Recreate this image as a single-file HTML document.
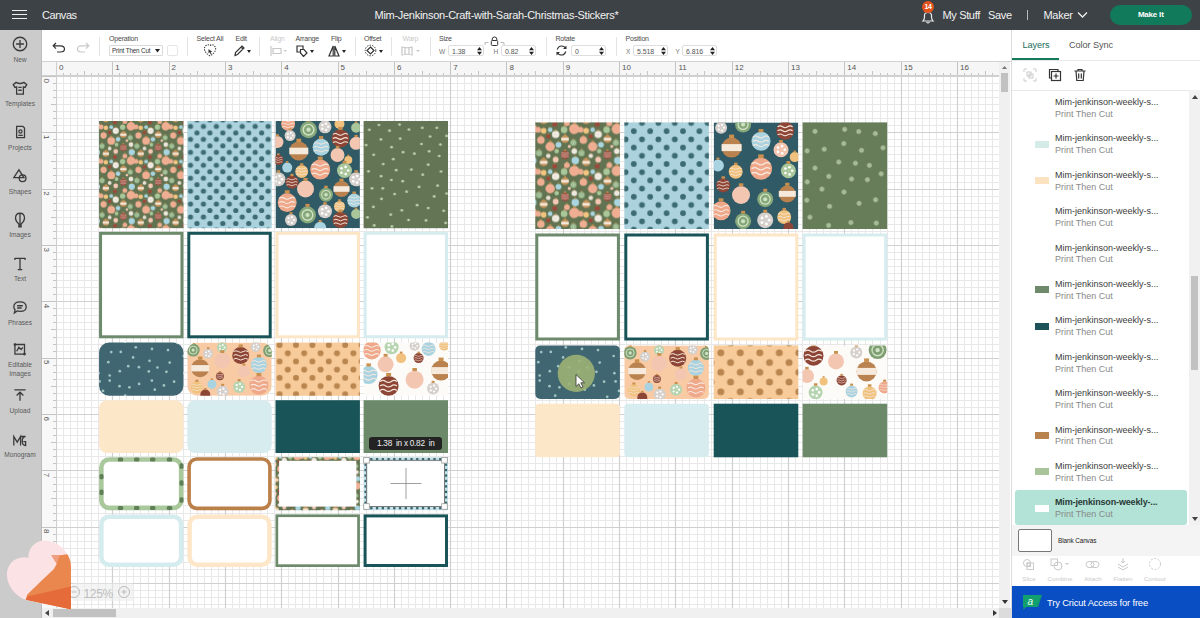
<!DOCTYPE html><html><head><meta charset="utf-8"><style>html,body{margin:0;padding:0;}body{width:1200px;height:618px;overflow:hidden;position:relative;background:#fff;font-family:"Liberation Sans", sans-serif;}</style></head><body><svg width="944" height="532" style="position:absolute;left:56px;top:76px"><rect width="944" height="532" fill="#ffffff"/><path d="M7.5 0V532M14.5 0V532M21.5 0V532M28.5 0V532M35.5 0V532M42.5 0V532M49.5 0V532M63.5 0V532M70.5 0V532M77.5 0V532M84.5 0V532M92.5 0V532M99.5 0V532M106.5 0V532M120.5 0V532M127.5 0V532M134.5 0V532M141.5 0V532M148.5 0V532M155.5 0V532M162.5 0V532M176.5 0V532M183.5 0V532M190.5 0V532M197.5 0V532M204.5 0V532M211.5 0V532M218.5 0V532M232.5 0V532M239.5 0V532M246.5 0V532M253.5 0V532M260.5 0V532M267.5 0V532M275.5 0V532M289.5 0V532M296.5 0V532M303.5 0V532M310.5 0V532M317.5 0V532M324.5 0V532M331.5 0V532M345.5 0V532M352.5 0V532M359.5 0V532M366.5 0V532M373.5 0V532M380.5 0V532M387.5 0V532M401.5 0V532M408.5 0V532M415.5 0V532M422.5 0V532M429.5 0V532M436.5 0V532M443.5 0V532M458.5 0V532M465.5 0V532M472.5 0V532M479.5 0V532M486.5 0V532M493.5 0V532M500.5 0V532M514.5 0V532M521.5 0V532M528.5 0V532M535.5 0V532M542.5 0V532M549.5 0V532M556.5 0V532M570.5 0V532M577.5 0V532M584.5 0V532M591.5 0V532M598.5 0V532M605.5 0V532M612.5 0V532M626.5 0V532M633.5 0V532M641.5 0V532M648.5 0V532M655.5 0V532M662.5 0V532M669.5 0V532M683.5 0V532M690.5 0V532M697.5 0V532M704.5 0V532M711.5 0V532M718.5 0V532M725.5 0V532M739.5 0V532M746.5 0V532M753.5 0V532M760.5 0V532M767.5 0V532M774.5 0V532M781.5 0V532M795.5 0V532M802.5 0V532M809.5 0V532M816.5 0V532M824.5 0V532M831.5 0V532M838.5 0V532M852.5 0V532M859.5 0V532M866.5 0V532M873.5 0V532M880.5 0V532M887.5 0V532M894.5 0V532M908.5 0V532M915.5 0V532M922.5 0V532M929.5 0V532M936.5 0V532M943.5 0V532M0 7.5H944M0 14.5H944M0 21.5H944M0 28.5H944M0 35.5H944M0 42.5H944M0 49.5H944M0 63.5H944M0 70.5H944M0 78.5H944M0 85.5H944M0 92.5H944M0 99.5H944M0 106.5H944M0 120.5H944M0 127.5H944M0 134.5H944M0 141.5H944M0 148.5H944M0 155.5H944M0 162.5H944M0 176.5H944M0 183.5H944M0 190.5H944M0 197.5H944M0 204.5H944M0 211.5H944M0 218.5H944M0 232.5H944M0 239.5H944M0 246.5H944M0 253.5H944M0 261.5H944M0 268.5H944M0 275.5H944M0 289.5H944M0 296.5H944M0 303.5H944M0 310.5H944M0 317.5H944M0 324.5H944M0 331.5H944M0 345.5H944M0 352.5H944M0 359.5H944M0 366.5H944M0 373.5H944M0 380.5H944M0 387.5H944M0 401.5H944M0 408.5H944M0 415.5H944M0 422.5H944M0 429.5H944M0 437.5H944M0 444.5H944M0 458.5H944M0 465.5H944M0 472.5H944M0 479.5H944M0 486.5H944M0 493.5H944M0 500.5H944M0 514.5H944M0 521.5H944M0 528.5H944" stroke="#e8e8e8" stroke-width="1" fill="none"/><path d="M0.5 0V532M56.5 0V532M113.5 0V532M169.5 0V532M225.5 0V532M282.5 0V532M338.5 0V532M394.5 0V532M450.5 0V532M507.5 0V532M563.5 0V532M619.5 0V532M676.5 0V532M732.5 0V532M788.5 0V532M845.5 0V532M901.5 0V532M0 0.5H944M0 56.5H944M0 113.5H944M0 169.5H944M0 225.5H944M0 282.5H944M0 338.5H944M0 394.5H944M0 451.5H944M0 507.5H944" stroke="#d0d0d0" stroke-width="1.2" fill="none"/></svg><svg width="1200" height="618" style="position:absolute;left:0;top:0"><defs><pattern id="pA" patternUnits="userSpaceOnUse" width="42.5" height="42" patternTransform="translate(535.3 122.4)"><rect width="42.5" height="42" fill="#617351"/><circle cx="2.8" cy="7.4" r="2.9" fill="#efae92"/><rect x="2.1" y="3.6" width="1.4" height="1.0" fill="#c9904f"/><circle cx="45.3" cy="7.4" r="2.9" fill="#efae92"/><rect x="44.6" y="3.6" width="1.4" height="1.0" fill="#c9904f"/><circle cx="8.4" cy="8.4" r="2.8" fill="#f1c47f"/><rect x="7.7" y="4.8" width="1.4" height="1.0" fill="#c9904f"/><circle cx="14.9" cy="7.4" r="2.3" fill="#a9d5e0"/><rect x="14.3" y="4.4" width="1.1" height="0.8" fill="#c9904f"/><circle cx="19.5" cy="1.9" r="2.5" fill="#9a4a3a"/><rect x="18.9" y="-1.4" width="1.2" height="0.9" fill="#c9904f"/><circle cx="19.5" cy="43.9" r="2.5" fill="#9a4a3a"/><rect x="18.9" y="40.6" width="1.2" height="0.9" fill="#c9904f"/><circle cx="28.8" cy="7.4" r="3.3" fill="#a9c89a"/><rect x="28.0" y="3.1" width="1.6" height="1.2" fill="#c9904f"/><circle cx="-3.5" cy="6.5" r="5.2" fill="#efae92"/><rect x="-4.8" y="-0.3" width="2.6" height="1.8" fill="#c9904f"/><circle cx="-3.5" cy="48.5" r="5.2" fill="#efae92"/><rect x="-4.8" y="41.7" width="2.6" height="1.8" fill="#c9904f"/><circle cx="39.0" cy="6.5" r="5.2" fill="#efae92"/><rect x="37.7" y="-0.3" width="2.6" height="1.8" fill="#c9904f"/><circle cx="39.0" cy="48.5" r="5.2" fill="#efae92"/><rect x="37.7" y="41.7" width="2.6" height="1.8" fill="#c9904f"/><circle cx="20.4" cy="12.0" r="3.8" fill="#e9e2d6"/><rect x="19.4" y="7.1" width="1.9" height="1.3" fill="#c9904f"/><circle cx="22.3" cy="12.0" r="0.7" fill="#ffffff"/><circle cx="21.0" cy="13.8" r="0.7" fill="#ffffff"/><circle cx="18.9" cy="13.1" r="0.7" fill="#ffffff"/><circle cx="18.9" cy="10.9" r="0.7" fill="#ffffff"/><circle cx="21.0" cy="10.2" r="0.7" fill="#ffffff"/><circle cx="5.6" cy="17.7" r="3.8" fill="#efae92"/><rect x="4.6" y="12.8" width="1.9" height="1.3" fill="#c9904f"/><circle cx="48.1" cy="17.7" r="3.8" fill="#efae92"/><rect x="47.1" y="12.8" width="1.9" height="1.3" fill="#c9904f"/><circle cx="13.0" cy="14.0" r="2.3" fill="#9a4a3a"/><rect x="12.4" y="11.0" width="1.1" height="0.8" fill="#c9904f"/><circle cx="29.7" cy="16.7" r="3.8" fill="#c9945c"/><rect x="28.8" y="11.8" width="1.9" height="1.3" fill="#c9904f"/><rect x="25.9" y="15.4" width="7.6" height="2.7" fill="#f5eadc"/><circle cx="14.9" cy="24.2" r="4.7" fill="#efae92"/><rect x="13.7" y="18.1" width="2.4" height="1.6" fill="#c9904f"/><circle cx="23.2" cy="22.3" r="2.9" fill="#a9d5e0"/><rect x="22.5" y="18.5" width="1.4" height="1.0" fill="#c9904f"/><circle cx="-4.4" cy="20.4" r="3.3" fill="#86a77a"/><rect x="-5.2" y="16.1" width="1.6" height="1.2" fill="#c9904f"/><circle cx="-4.4" cy="20.4" r="2.0" fill="none" stroke="#cfe3c4" stroke-width="0.6"/><circle cx="-4.4" cy="20.4" r="0.8" fill="#cfe3c4"/><circle cx="38.1" cy="20.4" r="3.3" fill="#86a77a"/><rect x="37.3" y="16.1" width="1.6" height="1.2" fill="#c9904f"/><circle cx="38.1" cy="20.4" r="2.0" fill="none" stroke="#cfe3c4" stroke-width="0.6"/><circle cx="38.1" cy="20.4" r="0.8" fill="#cfe3c4"/><circle cx="3.7" cy="30.7" r="3.4" fill="#86a77a"/><rect x="2.9" y="26.3" width="1.7" height="1.2" fill="#c9904f"/><circle cx="3.7" cy="30.7" r="2.1" fill="none" stroke="#cfe3c4" stroke-width="0.6"/><circle cx="3.7" cy="30.7" r="0.8" fill="#cfe3c4"/><circle cx="46.2" cy="30.7" r="3.4" fill="#86a77a"/><rect x="45.4" y="26.3" width="1.7" height="1.2" fill="#c9904f"/><circle cx="46.2" cy="30.7" r="2.1" fill="none" stroke="#cfe3c4" stroke-width="0.6"/><circle cx="46.2" cy="30.7" r="0.8" fill="#cfe3c4"/><circle cx="21.4" cy="28.8" r="2.3" fill="#a9c89a"/><rect x="20.8" y="25.8" width="1.1" height="0.8" fill="#c9904f"/><circle cx="29.7" cy="32.5" r="4.2" fill="#9a4a3a"/><rect x="28.6" y="27.0" width="2.1" height="1.5" fill="#c9904f"/><path d="M26.1 30.6q1.2 -0.8 2.4 0t2.4 0t2.4 0" stroke="#f6e8de" stroke-width="0.6" fill="none"/><path d="M26.1 32.5q1.2 -0.8 2.4 0t2.4 0t2.4 0" stroke="#f6e8de" stroke-width="0.6" fill="none"/><path d="M26.1 34.4q1.2 -0.8 2.4 0t2.4 0t2.4 0" stroke="#f6e8de" stroke-width="0.6" fill="none"/><circle cx="-3.5" cy="28.8" r="2.9" fill="#e9e2d6"/><rect x="-4.2" y="25.0" width="1.4" height="1.0" fill="#c9904f"/><circle cx="-2.0" cy="28.8" r="0.5" fill="#ffffff"/><circle cx="-3.1" cy="30.2" r="0.5" fill="#ffffff"/><circle cx="-4.7" cy="29.7" r="0.5" fill="#ffffff"/><circle cx="-4.7" cy="27.9" r="0.5" fill="#ffffff"/><circle cx="-3.1" cy="27.4" r="0.5" fill="#ffffff"/><circle cx="39.0" cy="28.8" r="2.9" fill="#e9e2d6"/><rect x="38.3" y="25.0" width="1.4" height="1.0" fill="#c9904f"/><circle cx="40.5" cy="28.8" r="0.5" fill="#ffffff"/><circle cx="39.4" cy="30.2" r="0.5" fill="#ffffff"/><circle cx="37.8" cy="29.7" r="0.5" fill="#ffffff"/><circle cx="37.8" cy="27.9" r="0.5" fill="#ffffff"/><circle cx="39.4" cy="27.4" r="0.5" fill="#ffffff"/><circle cx="13.0" cy="33.5" r="2.3" fill="#e9e2d6"/><rect x="12.4" y="30.5" width="1.1" height="0.8" fill="#c9904f"/><circle cx="8.4" cy="-2.1" r="3.8" fill="#c9945c"/><rect x="7.5" y="-7.0" width="1.9" height="1.3" fill="#c9904f"/><rect x="4.6" y="-3.4" width="7.6" height="2.7" fill="#f5eadc"/><circle cx="8.4" cy="39.9" r="3.8" fill="#c9945c"/><rect x="7.5" y="35.0" width="1.9" height="1.3" fill="#c9904f"/><rect x="4.6" y="38.6" width="7.6" height="2.7" fill="#f5eadc"/><circle cx="20.4" cy="-4.8" r="2.9" fill="#f5c8b6"/><rect x="19.7" y="-8.6" width="1.4" height="1.0" fill="#c9904f"/><circle cx="20.4" cy="37.2" r="2.9" fill="#f5c8b6"/><rect x="19.7" y="33.4" width="1.4" height="1.0" fill="#c9904f"/><circle cx="-2.5" cy="-3.9" r="3.8" fill="#a9d5e0"/><rect x="-3.5" y="-8.8" width="1.9" height="1.3" fill="#c9904f"/><circle cx="-2.5" cy="38.1" r="3.8" fill="#a9d5e0"/><rect x="-3.5" y="33.2" width="1.9" height="1.3" fill="#c9904f"/><circle cx="40.0" cy="-3.9" r="3.8" fill="#a9d5e0"/><rect x="39.0" y="-8.8" width="1.9" height="1.3" fill="#c9904f"/><circle cx="40.0" cy="38.1" r="3.8" fill="#a9d5e0"/><rect x="39.0" y="33.2" width="1.9" height="1.3" fill="#c9904f"/><circle cx="31.6" cy="0.8" r="2.9" fill="#efae92"/><rect x="30.9" y="-3.0" width="1.4" height="1.0" fill="#c9904f"/><circle cx="31.6" cy="42.8" r="2.9" fill="#efae92"/><rect x="30.9" y="39.0" width="1.4" height="1.0" fill="#c9904f"/><circle cx="34.0" cy="24.0" r="1.6" fill="#f5c8b6"/><rect x="33.6" y="21.9" width="0.8" height="0.6" fill="#c9904f"/></pattern><pattern id="pA5" patternUnits="userSpaceOnUse" width="42.5" height="42" patternTransform="translate(270 452) scale(0.7)"><rect width="42.5" height="42" fill="#617351"/><circle cx="2.8" cy="7.4" r="2.9" fill="#efae92"/><rect x="2.1" y="3.6" width="1.4" height="1.0" fill="#c9904f"/><circle cx="45.3" cy="7.4" r="2.9" fill="#efae92"/><rect x="44.6" y="3.6" width="1.4" height="1.0" fill="#c9904f"/><circle cx="8.4" cy="8.4" r="2.8" fill="#f1c47f"/><rect x="7.7" y="4.8" width="1.4" height="1.0" fill="#c9904f"/><circle cx="14.9" cy="7.4" r="2.3" fill="#a9d5e0"/><rect x="14.3" y="4.4" width="1.1" height="0.8" fill="#c9904f"/><circle cx="19.5" cy="1.9" r="2.5" fill="#9a4a3a"/><rect x="18.9" y="-1.4" width="1.2" height="0.9" fill="#c9904f"/><circle cx="19.5" cy="43.9" r="2.5" fill="#9a4a3a"/><rect x="18.9" y="40.6" width="1.2" height="0.9" fill="#c9904f"/><circle cx="28.8" cy="7.4" r="3.3" fill="#a9c89a"/><rect x="28.0" y="3.1" width="1.6" height="1.2" fill="#c9904f"/><circle cx="-3.5" cy="6.5" r="5.2" fill="#efae92"/><rect x="-4.8" y="-0.3" width="2.6" height="1.8" fill="#c9904f"/><circle cx="-3.5" cy="48.5" r="5.2" fill="#efae92"/><rect x="-4.8" y="41.7" width="2.6" height="1.8" fill="#c9904f"/><circle cx="39.0" cy="6.5" r="5.2" fill="#efae92"/><rect x="37.7" y="-0.3" width="2.6" height="1.8" fill="#c9904f"/><circle cx="39.0" cy="48.5" r="5.2" fill="#efae92"/><rect x="37.7" y="41.7" width="2.6" height="1.8" fill="#c9904f"/><circle cx="20.4" cy="12.0" r="3.8" fill="#e9e2d6"/><rect x="19.4" y="7.1" width="1.9" height="1.3" fill="#c9904f"/><circle cx="22.3" cy="12.0" r="0.7" fill="#ffffff"/><circle cx="21.0" cy="13.8" r="0.7" fill="#ffffff"/><circle cx="18.9" cy="13.1" r="0.7" fill="#ffffff"/><circle cx="18.9" cy="10.9" r="0.7" fill="#ffffff"/><circle cx="21.0" cy="10.2" r="0.7" fill="#ffffff"/><circle cx="5.6" cy="17.7" r="3.8" fill="#efae92"/><rect x="4.6" y="12.8" width="1.9" height="1.3" fill="#c9904f"/><circle cx="48.1" cy="17.7" r="3.8" fill="#efae92"/><rect x="47.1" y="12.8" width="1.9" height="1.3" fill="#c9904f"/><circle cx="13.0" cy="14.0" r="2.3" fill="#9a4a3a"/><rect x="12.4" y="11.0" width="1.1" height="0.8" fill="#c9904f"/><circle cx="29.7" cy="16.7" r="3.8" fill="#c9945c"/><rect x="28.8" y="11.8" width="1.9" height="1.3" fill="#c9904f"/><rect x="25.9" y="15.4" width="7.6" height="2.7" fill="#f5eadc"/><circle cx="14.9" cy="24.2" r="4.7" fill="#efae92"/><rect x="13.7" y="18.1" width="2.4" height="1.6" fill="#c9904f"/><circle cx="23.2" cy="22.3" r="2.9" fill="#a9d5e0"/><rect x="22.5" y="18.5" width="1.4" height="1.0" fill="#c9904f"/><circle cx="-4.4" cy="20.4" r="3.3" fill="#86a77a"/><rect x="-5.2" y="16.1" width="1.6" height="1.2" fill="#c9904f"/><circle cx="-4.4" cy="20.4" r="2.0" fill="none" stroke="#cfe3c4" stroke-width="0.6"/><circle cx="-4.4" cy="20.4" r="0.8" fill="#cfe3c4"/><circle cx="38.1" cy="20.4" r="3.3" fill="#86a77a"/><rect x="37.3" y="16.1" width="1.6" height="1.2" fill="#c9904f"/><circle cx="38.1" cy="20.4" r="2.0" fill="none" stroke="#cfe3c4" stroke-width="0.6"/><circle cx="38.1" cy="20.4" r="0.8" fill="#cfe3c4"/><circle cx="3.7" cy="30.7" r="3.4" fill="#86a77a"/><rect x="2.9" y="26.3" width="1.7" height="1.2" fill="#c9904f"/><circle cx="3.7" cy="30.7" r="2.1" fill="none" stroke="#cfe3c4" stroke-width="0.6"/><circle cx="3.7" cy="30.7" r="0.8" fill="#cfe3c4"/><circle cx="46.2" cy="30.7" r="3.4" fill="#86a77a"/><rect x="45.4" y="26.3" width="1.7" height="1.2" fill="#c9904f"/><circle cx="46.2" cy="30.7" r="2.1" fill="none" stroke="#cfe3c4" stroke-width="0.6"/><circle cx="46.2" cy="30.7" r="0.8" fill="#cfe3c4"/><circle cx="21.4" cy="28.8" r="2.3" fill="#a9c89a"/><rect x="20.8" y="25.8" width="1.1" height="0.8" fill="#c9904f"/><circle cx="29.7" cy="32.5" r="4.2" fill="#9a4a3a"/><rect x="28.6" y="27.0" width="2.1" height="1.5" fill="#c9904f"/><path d="M26.1 30.6q1.2 -0.8 2.4 0t2.4 0t2.4 0" stroke="#f6e8de" stroke-width="0.6" fill="none"/><path d="M26.1 32.5q1.2 -0.8 2.4 0t2.4 0t2.4 0" stroke="#f6e8de" stroke-width="0.6" fill="none"/><path d="M26.1 34.4q1.2 -0.8 2.4 0t2.4 0t2.4 0" stroke="#f6e8de" stroke-width="0.6" fill="none"/><circle cx="-3.5" cy="28.8" r="2.9" fill="#e9e2d6"/><rect x="-4.2" y="25.0" width="1.4" height="1.0" fill="#c9904f"/><circle cx="-2.0" cy="28.8" r="0.5" fill="#ffffff"/><circle cx="-3.1" cy="30.2" r="0.5" fill="#ffffff"/><circle cx="-4.7" cy="29.7" r="0.5" fill="#ffffff"/><circle cx="-4.7" cy="27.9" r="0.5" fill="#ffffff"/><circle cx="-3.1" cy="27.4" r="0.5" fill="#ffffff"/><circle cx="39.0" cy="28.8" r="2.9" fill="#e9e2d6"/><rect x="38.3" y="25.0" width="1.4" height="1.0" fill="#c9904f"/><circle cx="40.5" cy="28.8" r="0.5" fill="#ffffff"/><circle cx="39.4" cy="30.2" r="0.5" fill="#ffffff"/><circle cx="37.8" cy="29.7" r="0.5" fill="#ffffff"/><circle cx="37.8" cy="27.9" r="0.5" fill="#ffffff"/><circle cx="39.4" cy="27.4" r="0.5" fill="#ffffff"/><circle cx="13.0" cy="33.5" r="2.3" fill="#e9e2d6"/><rect x="12.4" y="30.5" width="1.1" height="0.8" fill="#c9904f"/><circle cx="8.4" cy="-2.1" r="3.8" fill="#c9945c"/><rect x="7.5" y="-7.0" width="1.9" height="1.3" fill="#c9904f"/><rect x="4.6" y="-3.4" width="7.6" height="2.7" fill="#f5eadc"/><circle cx="8.4" cy="39.9" r="3.8" fill="#c9945c"/><rect x="7.5" y="35.0" width="1.9" height="1.3" fill="#c9904f"/><rect x="4.6" y="38.6" width="7.6" height="2.7" fill="#f5eadc"/><circle cx="20.4" cy="-4.8" r="2.9" fill="#f5c8b6"/><rect x="19.7" y="-8.6" width="1.4" height="1.0" fill="#c9904f"/><circle cx="20.4" cy="37.2" r="2.9" fill="#f5c8b6"/><rect x="19.7" y="33.4" width="1.4" height="1.0" fill="#c9904f"/><circle cx="-2.5" cy="-3.9" r="3.8" fill="#a9d5e0"/><rect x="-3.5" y="-8.8" width="1.9" height="1.3" fill="#c9904f"/><circle cx="-2.5" cy="38.1" r="3.8" fill="#a9d5e0"/><rect x="-3.5" y="33.2" width="1.9" height="1.3" fill="#c9904f"/><circle cx="40.0" cy="-3.9" r="3.8" fill="#a9d5e0"/><rect x="39.0" y="-8.8" width="1.9" height="1.3" fill="#c9904f"/><circle cx="40.0" cy="38.1" r="3.8" fill="#a9d5e0"/><rect x="39.0" y="33.2" width="1.9" height="1.3" fill="#c9904f"/><circle cx="31.6" cy="0.8" r="2.9" fill="#efae92"/><rect x="30.9" y="-3.0" width="1.4" height="1.0" fill="#c9904f"/><circle cx="31.6" cy="42.8" r="2.9" fill="#efae92"/><rect x="30.9" y="39.0" width="1.4" height="1.0" fill="#c9904f"/><circle cx="34.0" cy="24.0" r="1.6" fill="#f5c8b6"/><rect x="33.6" y="21.9" width="0.8" height="0.6" fill="#c9904f"/></pattern><pattern id="pAL" patternUnits="userSpaceOnUse" width="42.5" height="42" patternTransform="translate(99 121) scale(0.82)"><rect width="42.5" height="42" fill="#617351"/><circle cx="2.8" cy="7.4" r="2.9" fill="#efae92"/><rect x="2.1" y="3.6" width="1.4" height="1.0" fill="#c9904f"/><circle cx="45.3" cy="7.4" r="2.9" fill="#efae92"/><rect x="44.6" y="3.6" width="1.4" height="1.0" fill="#c9904f"/><circle cx="8.4" cy="8.4" r="2.8" fill="#f1c47f"/><rect x="7.7" y="4.8" width="1.4" height="1.0" fill="#c9904f"/><circle cx="14.9" cy="7.4" r="2.3" fill="#a9d5e0"/><rect x="14.3" y="4.4" width="1.1" height="0.8" fill="#c9904f"/><circle cx="19.5" cy="1.9" r="2.5" fill="#9a4a3a"/><rect x="18.9" y="-1.4" width="1.2" height="0.9" fill="#c9904f"/><circle cx="19.5" cy="43.9" r="2.5" fill="#9a4a3a"/><rect x="18.9" y="40.6" width="1.2" height="0.9" fill="#c9904f"/><circle cx="28.8" cy="7.4" r="3.3" fill="#a9c89a"/><rect x="28.0" y="3.1" width="1.6" height="1.2" fill="#c9904f"/><circle cx="-3.5" cy="6.5" r="5.2" fill="#efae92"/><rect x="-4.8" y="-0.3" width="2.6" height="1.8" fill="#c9904f"/><circle cx="-3.5" cy="48.5" r="5.2" fill="#efae92"/><rect x="-4.8" y="41.7" width="2.6" height="1.8" fill="#c9904f"/><circle cx="39.0" cy="6.5" r="5.2" fill="#efae92"/><rect x="37.7" y="-0.3" width="2.6" height="1.8" fill="#c9904f"/><circle cx="39.0" cy="48.5" r="5.2" fill="#efae92"/><rect x="37.7" y="41.7" width="2.6" height="1.8" fill="#c9904f"/><circle cx="20.4" cy="12.0" r="3.8" fill="#e9e2d6"/><rect x="19.4" y="7.1" width="1.9" height="1.3" fill="#c9904f"/><circle cx="22.3" cy="12.0" r="0.7" fill="#ffffff"/><circle cx="21.0" cy="13.8" r="0.7" fill="#ffffff"/><circle cx="18.9" cy="13.1" r="0.7" fill="#ffffff"/><circle cx="18.9" cy="10.9" r="0.7" fill="#ffffff"/><circle cx="21.0" cy="10.2" r="0.7" fill="#ffffff"/><circle cx="5.6" cy="17.7" r="3.8" fill="#efae92"/><rect x="4.6" y="12.8" width="1.9" height="1.3" fill="#c9904f"/><circle cx="48.1" cy="17.7" r="3.8" fill="#efae92"/><rect x="47.1" y="12.8" width="1.9" height="1.3" fill="#c9904f"/><circle cx="13.0" cy="14.0" r="2.3" fill="#9a4a3a"/><rect x="12.4" y="11.0" width="1.1" height="0.8" fill="#c9904f"/><circle cx="29.7" cy="16.7" r="3.8" fill="#c9945c"/><rect x="28.8" y="11.8" width="1.9" height="1.3" fill="#c9904f"/><rect x="25.9" y="15.4" width="7.6" height="2.7" fill="#f5eadc"/><circle cx="14.9" cy="24.2" r="4.7" fill="#efae92"/><rect x="13.7" y="18.1" width="2.4" height="1.6" fill="#c9904f"/><circle cx="23.2" cy="22.3" r="2.9" fill="#a9d5e0"/><rect x="22.5" y="18.5" width="1.4" height="1.0" fill="#c9904f"/><circle cx="-4.4" cy="20.4" r="3.3" fill="#86a77a"/><rect x="-5.2" y="16.1" width="1.6" height="1.2" fill="#c9904f"/><circle cx="-4.4" cy="20.4" r="2.0" fill="none" stroke="#cfe3c4" stroke-width="0.6"/><circle cx="-4.4" cy="20.4" r="0.8" fill="#cfe3c4"/><circle cx="38.1" cy="20.4" r="3.3" fill="#86a77a"/><rect x="37.3" y="16.1" width="1.6" height="1.2" fill="#c9904f"/><circle cx="38.1" cy="20.4" r="2.0" fill="none" stroke="#cfe3c4" stroke-width="0.6"/><circle cx="38.1" cy="20.4" r="0.8" fill="#cfe3c4"/><circle cx="3.7" cy="30.7" r="3.4" fill="#86a77a"/><rect x="2.9" y="26.3" width="1.7" height="1.2" fill="#c9904f"/><circle cx="3.7" cy="30.7" r="2.1" fill="none" stroke="#cfe3c4" stroke-width="0.6"/><circle cx="3.7" cy="30.7" r="0.8" fill="#cfe3c4"/><circle cx="46.2" cy="30.7" r="3.4" fill="#86a77a"/><rect x="45.4" y="26.3" width="1.7" height="1.2" fill="#c9904f"/><circle cx="46.2" cy="30.7" r="2.1" fill="none" stroke="#cfe3c4" stroke-width="0.6"/><circle cx="46.2" cy="30.7" r="0.8" fill="#cfe3c4"/><circle cx="21.4" cy="28.8" r="2.3" fill="#a9c89a"/><rect x="20.8" y="25.8" width="1.1" height="0.8" fill="#c9904f"/><circle cx="29.7" cy="32.5" r="4.2" fill="#9a4a3a"/><rect x="28.6" y="27.0" width="2.1" height="1.5" fill="#c9904f"/><path d="M26.1 30.6q1.2 -0.8 2.4 0t2.4 0t2.4 0" stroke="#f6e8de" stroke-width="0.6" fill="none"/><path d="M26.1 32.5q1.2 -0.8 2.4 0t2.4 0t2.4 0" stroke="#f6e8de" stroke-width="0.6" fill="none"/><path d="M26.1 34.4q1.2 -0.8 2.4 0t2.4 0t2.4 0" stroke="#f6e8de" stroke-width="0.6" fill="none"/><circle cx="-3.5" cy="28.8" r="2.9" fill="#e9e2d6"/><rect x="-4.2" y="25.0" width="1.4" height="1.0" fill="#c9904f"/><circle cx="-2.0" cy="28.8" r="0.5" fill="#ffffff"/><circle cx="-3.1" cy="30.2" r="0.5" fill="#ffffff"/><circle cx="-4.7" cy="29.7" r="0.5" fill="#ffffff"/><circle cx="-4.7" cy="27.9" r="0.5" fill="#ffffff"/><circle cx="-3.1" cy="27.4" r="0.5" fill="#ffffff"/><circle cx="39.0" cy="28.8" r="2.9" fill="#e9e2d6"/><rect x="38.3" y="25.0" width="1.4" height="1.0" fill="#c9904f"/><circle cx="40.5" cy="28.8" r="0.5" fill="#ffffff"/><circle cx="39.4" cy="30.2" r="0.5" fill="#ffffff"/><circle cx="37.8" cy="29.7" r="0.5" fill="#ffffff"/><circle cx="37.8" cy="27.9" r="0.5" fill="#ffffff"/><circle cx="39.4" cy="27.4" r="0.5" fill="#ffffff"/><circle cx="13.0" cy="33.5" r="2.3" fill="#e9e2d6"/><rect x="12.4" y="30.5" width="1.1" height="0.8" fill="#c9904f"/><circle cx="8.4" cy="-2.1" r="3.8" fill="#c9945c"/><rect x="7.5" y="-7.0" width="1.9" height="1.3" fill="#c9904f"/><rect x="4.6" y="-3.4" width="7.6" height="2.7" fill="#f5eadc"/><circle cx="8.4" cy="39.9" r="3.8" fill="#c9945c"/><rect x="7.5" y="35.0" width="1.9" height="1.3" fill="#c9904f"/><rect x="4.6" y="38.6" width="7.6" height="2.7" fill="#f5eadc"/><circle cx="20.4" cy="-4.8" r="2.9" fill="#f5c8b6"/><rect x="19.7" y="-8.6" width="1.4" height="1.0" fill="#c9904f"/><circle cx="20.4" cy="37.2" r="2.9" fill="#f5c8b6"/><rect x="19.7" y="33.4" width="1.4" height="1.0" fill="#c9904f"/><circle cx="-2.5" cy="-3.9" r="3.8" fill="#a9d5e0"/><rect x="-3.5" y="-8.8" width="1.9" height="1.3" fill="#c9904f"/><circle cx="-2.5" cy="38.1" r="3.8" fill="#a9d5e0"/><rect x="-3.5" y="33.2" width="1.9" height="1.3" fill="#c9904f"/><circle cx="40.0" cy="-3.9" r="3.8" fill="#a9d5e0"/><rect x="39.0" y="-8.8" width="1.9" height="1.3" fill="#c9904f"/><circle cx="40.0" cy="38.1" r="3.8" fill="#a9d5e0"/><rect x="39.0" y="33.2" width="1.9" height="1.3" fill="#c9904f"/><circle cx="31.6" cy="0.8" r="2.9" fill="#efae92"/><rect x="30.9" y="-3.0" width="1.4" height="1.0" fill="#c9904f"/><circle cx="31.6" cy="42.8" r="2.9" fill="#efae92"/><rect x="30.9" y="39.0" width="1.4" height="1.0" fill="#c9904f"/><circle cx="34.0" cy="24.0" r="1.6" fill="#f5c8b6"/><rect x="33.6" y="21.9" width="0.8" height="0.6" fill="#c9904f"/></pattern><pattern id="pB" patternUnits="userSpaceOnUse" width="12.94" height="12.94" patternTransform="translate(190.50 126.40)"><rect width="12.94" height="12.94" fill="#acd3dd"/><circle cx="0" cy="0" r="2.6" fill="#3d6b74"/><circle cx="12.94" cy="0" r="2.6" fill="#3d6b74"/><circle cx="0" cy="12.94" r="2.6" fill="#3d6b74"/><circle cx="12.94" cy="12.94" r="2.6" fill="#3d6b74"/><circle cx="6.47" cy="6.47" r="2.6" fill="#3d6b74"/></pattern><pattern id="pBR" patternUnits="userSpaceOnUse" width="16.4" height="16.4" patternTransform="translate(633.80 131.20)"><rect width="16.4" height="16.4" fill="#acd3dd"/><circle cx="0" cy="0" r="2.9" fill="#3d6b74"/><circle cx="16.4" cy="0" r="2.9" fill="#3d6b74"/><circle cx="0" cy="16.4" r="2.9" fill="#3d6b74"/><circle cx="16.4" cy="16.4" r="2.9" fill="#3d6b74"/><circle cx="8.2" cy="8.2" r="2.9" fill="#3d6b74"/></pattern><pattern id="pG" patternUnits="userSpaceOnUse" width="16.4" height="16.4" patternTransform="translate(279.60 345.00)"><rect width="16.4" height="16.4" fill="#f8cb9a"/><circle cx="0" cy="0" r="3.0" fill="#b98650"/><circle cx="16.4" cy="0" r="3.0" fill="#b98650"/><circle cx="0" cy="16.4" r="3.0" fill="#b98650"/><circle cx="16.4" cy="16.4" r="3.0" fill="#b98650"/><circle cx="8.2" cy="8.2" r="3.0" fill="#b98650"/></pattern><pattern id="pGR" patternUnits="userSpaceOnUse" width="19.5" height="19.5" patternTransform="translate(720.80 352.80)"><rect width="19.5" height="19.5" fill="#f8cb9a"/><circle cx="0" cy="0" r="3.5" fill="#b98650"/><circle cx="19.5" cy="0" r="3.5" fill="#b98650"/><circle cx="0" cy="19.5" r="3.5" fill="#b98650"/><circle cx="19.5" cy="19.5" r="3.5" fill="#b98650"/><circle cx="9.75" cy="9.75" r="3.5" fill="#b98650"/></pattern><pattern id="pC" patternUnits="userSpaceOnUse" width="86" height="108"><rect width="86" height="108" fill="#2e5a65"/><circle cx="10.0" cy="6.0" r="7.0" fill="#d9d2cc"/><rect x="8.2" y="-3.1" width="3.5" height="2.4" fill="#c9904f"/><circle cx="13.5" cy="6.0" r="1.3" fill="#ffffff"/><circle cx="11.1" cy="9.3" r="1.3" fill="#ffffff"/><circle cx="7.2" cy="8.1" r="1.3" fill="#ffffff"/><circle cx="7.2" cy="3.9" r="1.3" fill="#ffffff"/><circle cx="11.1" cy="2.7" r="1.3" fill="#ffffff"/><circle cx="32.0" cy="4.0" r="7.0" fill="#a9c79b"/><rect x="30.2" y="-5.1" width="3.5" height="2.4" fill="#c9904f"/><circle cx="32.0" cy="4.0" r="4.3" fill="none" stroke="#cfe3c4" stroke-width="1.1"/><circle cx="32.0" cy="4.0" r="1.8" fill="#cfe3c4"/><circle cx="63.0" cy="8.0" r="9.0" fill="#8f4334"/><rect x="60.8" y="-3.7" width="4.5" height="3.1" fill="#c9904f"/><path d="M55.4 4.0q2.5 -1.8 5.0 0t5.0 0t5.0 0" stroke="#f6e8de" stroke-width="1.1" fill="none"/><path d="M55.4 8.0q2.5 -1.8 5.0 0t5.0 0t5.0 0" stroke="#f6e8de" stroke-width="1.1" fill="none"/><path d="M55.4 12.1q2.5 -1.8 5.0 0t5.0 0t5.0 0" stroke="#f6e8de" stroke-width="1.1" fill="none"/><circle cx="18.0" cy="24.0" r="11.0" fill="#c98a4c"/><rect x="15.2" y="9.7" width="5.5" height="3.8" fill="#c9904f"/><rect x="7.0" y="20.1" width="22.0" height="7.7" fill="#f5eadc"/><circle cx="48.0" cy="20.0" r="10.0" fill="#a9d3e0"/><rect x="45.5" y="7.0" width="5.0" height="3.5" fill="#c9904f"/><path d="M39.5 15.5q2.8 -2.0 5.6 0t5.6 0t5.6 0" stroke="#f6e8de" stroke-width="1.2" fill="none"/><path d="M39.5 20.0q2.8 -2.0 5.6 0t5.6 0t5.6 0" stroke="#f6e8de" stroke-width="1.2" fill="none"/><path d="M39.5 24.5q2.8 -2.0 5.6 0t5.6 0t5.6 0" stroke="#f6e8de" stroke-width="1.2" fill="none"/><circle cx="72.0" cy="30.0" r="9.0" fill="#f2c5b2"/><rect x="69.8" y="18.3" width="4.5" height="3.1" fill="#c9904f"/><circle cx="76.5" cy="30.0" r="1.6" fill="#ffffff"/><circle cx="73.4" cy="34.3" r="1.6" fill="#ffffff"/><circle cx="68.4" cy="32.6" r="1.6" fill="#ffffff"/><circle cx="68.4" cy="27.4" r="1.6" fill="#ffffff"/><circle cx="73.4" cy="25.7" r="1.6" fill="#ffffff"/><circle cx="5.0" cy="48.0" r="7.0" fill="#a9d3e0"/><rect x="3.2" y="38.9" width="3.5" height="2.4" fill="#c9904f"/><circle cx="22.0" cy="50.0" r="8.0" fill="#f0c27e"/><rect x="20.0" y="39.6" width="4.0" height="2.8" fill="#c9904f"/><path d="M15.2 46.4q2.2 -1.6 4.5 0t4.5 0t4.5 0" stroke="#f6e8de" stroke-width="1.0" fill="none"/><path d="M15.2 50.0q2.2 -1.6 4.5 0t4.5 0t4.5 0" stroke="#f6e8de" stroke-width="1.0" fill="none"/><path d="M15.2 53.6q2.2 -1.6 4.5 0t4.5 0t4.5 0" stroke="#f6e8de" stroke-width="1.0" fill="none"/><circle cx="48.0" cy="48.0" r="13.0" fill="#f2b79c"/><rect x="44.8" y="31.1" width="6.5" height="4.5" fill="#c9904f"/><path d="M37.0 42.1q3.6 -2.6 7.3 0t7.3 0t7.3 0" stroke="#f6e8de" stroke-width="1.6" fill="none"/><path d="M37.0 48.0q3.6 -2.6 7.3 0t7.3 0t7.3 0" stroke="#f6e8de" stroke-width="1.6" fill="none"/><path d="M37.0 53.9q3.6 -2.6 7.3 0t7.3 0t7.3 0" stroke="#f6e8de" stroke-width="1.6" fill="none"/><circle cx="76.0" cy="50.0" r="9.0" fill="#a9c79b"/><rect x="73.8" y="38.3" width="4.5" height="3.1" fill="#c9904f"/><circle cx="80.5" cy="50.0" r="1.6" fill="#ffffff"/><circle cx="77.4" cy="54.3" r="1.6" fill="#ffffff"/><circle cx="72.4" cy="52.6" r="1.6" fill="#ffffff"/><circle cx="72.4" cy="47.4" r="1.6" fill="#ffffff"/><circle cx="77.4" cy="45.7" r="1.6" fill="#ffffff"/><circle cx="10.0" cy="70.0" r="8.0" fill="#8f4334"/><rect x="8.0" y="59.6" width="4.0" height="2.8" fill="#c9904f"/><path d="M3.2 66.4q2.2 -1.6 4.5 0t4.5 0t4.5 0" stroke="#f6e8de" stroke-width="1.0" fill="none"/><path d="M3.2 70.0q2.2 -1.6 4.5 0t4.5 0t4.5 0" stroke="#f6e8de" stroke-width="1.0" fill="none"/><path d="M3.2 73.6q2.2 -1.6 4.5 0t4.5 0t4.5 0" stroke="#f6e8de" stroke-width="1.0" fill="none"/><circle cx="30.0" cy="72.0" r="10.0" fill="#f2c5b2"/><rect x="27.5" y="59.0" width="5.0" height="3.5" fill="#c9904f"/><circle cx="35.0" cy="72.0" r="1.8" fill="#ffffff"/><circle cx="31.5" cy="76.8" r="1.8" fill="#ffffff"/><circle cx="26.0" cy="74.9" r="1.8" fill="#ffffff"/><circle cx="25.9" cy="69.1" r="1.8" fill="#ffffff"/><circle cx="31.5" cy="67.2" r="1.8" fill="#ffffff"/><circle cx="58.0" cy="74.0" r="9.0" fill="#a9c79b"/><rect x="55.8" y="62.3" width="4.5" height="3.1" fill="#c9904f"/><circle cx="58.0" cy="74.0" r="5.6" fill="none" stroke="#cfe3c4" stroke-width="1.4"/><circle cx="58.0" cy="74.0" r="2.2" fill="#cfe3c4"/><circle cx="78.0" cy="80.0" r="10.0" fill="#c98a4c"/><rect x="75.5" y="67.0" width="5.0" height="3.5" fill="#c9904f"/><rect x="68.0" y="76.5" width="20.0" height="7.0" fill="#f5eadc"/><circle cx="8.0" cy="92.0" r="10.0" fill="#f2b79c"/><rect x="5.5" y="79.0" width="5.0" height="3.5" fill="#c9904f"/><path d="M-0.5 87.5q2.8 -2.0 5.6 0t5.6 0t5.6 0" stroke="#f6e8de" stroke-width="1.2" fill="none"/><path d="M-0.5 92.0q2.8 -2.0 5.6 0t5.6 0t5.6 0" stroke="#f6e8de" stroke-width="1.2" fill="none"/><path d="M-0.5 96.5q2.8 -2.0 5.6 0t5.6 0t5.6 0" stroke="#f6e8de" stroke-width="1.2" fill="none"/><circle cx="36.0" cy="98.0" r="9.0" fill="#a9c79b"/><rect x="33.8" y="86.3" width="4.5" height="3.1" fill="#c9904f"/><circle cx="36.0" cy="98.0" r="5.6" fill="none" stroke="#cfe3c4" stroke-width="1.4"/><circle cx="36.0" cy="98.0" r="2.2" fill="#cfe3c4"/><circle cx="56.0" cy="98.0" r="9.0" fill="#d9d2cc"/><rect x="53.8" y="86.3" width="4.5" height="3.1" fill="#c9904f"/><circle cx="60.5" cy="98.0" r="1.6" fill="#ffffff"/><circle cx="57.4" cy="102.3" r="1.6" fill="#ffffff"/><circle cx="52.4" cy="100.6" r="1.6" fill="#ffffff"/><circle cx="52.4" cy="95.4" r="1.6" fill="#ffffff"/><circle cx="57.4" cy="93.7" r="1.6" fill="#ffffff"/><circle cx="74.0" cy="96.0" r="7.0" fill="#f0c27e"/><rect x="72.2" y="86.9" width="3.5" height="2.4" fill="#c9904f"/><path d="M68.0 92.8q2.0 -1.4 3.9 0t3.9 0t3.9 0" stroke="#f6e8de" stroke-width="0.8" fill="none"/><path d="M68.0 96.0q2.0 -1.4 3.9 0t3.9 0t3.9 0" stroke="#f6e8de" stroke-width="0.8" fill="none"/><path d="M68.0 99.2q2.0 -1.4 3.9 0t3.9 0t3.9 0" stroke="#f6e8de" stroke-width="0.8" fill="none"/><circle cx="27.8" cy="16.3" r="1" fill="#c98a4c"/><circle cx="4.2" cy="88.7" r="1" fill="#f2b79c"/><circle cx="31.4" cy="6.3" r="1" fill="#c98a4c"/><circle cx="18.5" cy="9.3" r="1" fill="#a9c79b"/><circle cx="6.0" cy="9.8" r="1" fill="#a9c79b"/><circle cx="5.1" cy="61.1" r="1" fill="#f2b79c"/><circle cx="54.2" cy="63.0" r="1" fill="#f2b79c"/><circle cx="49.6" cy="42.8" r="1" fill="#f2b79c"/><circle cx="4.0" cy="92.7" r="1" fill="#a9c79b"/><circle cx="36.0" cy="58.4" r="1" fill="#c98a4c"/><circle cx="26.5" cy="88.1" r="1" fill="#f2b79c"/><circle cx="8.9" cy="61.7" r="1" fill="#f2b79c"/><circle cx="32.0" cy="59.2" r="1" fill="#f2b79c"/><circle cx="48.5" cy="66.9" r="1" fill="#a9c79b"/><circle cx="58.5" cy="46.2" r="1" fill="#a9c79b"/><circle cx="40.0" cy="99.7" r="1" fill="#a9c79b"/></pattern><pattern id="pD" patternUnits="userSpaceOnUse" width="86" height="108" patternTransform="translate(802.6 122.4)"><rect width="86" height="108" fill="#677d5a"/><circle cx="27.0" cy="84.0" r="1.9" fill="#9fb58e" stroke="#c8dab5" stroke-width="0.8"/><circle cx="58.9" cy="27.9" r="1.9" fill="#9fb58e" stroke="#c8dab5" stroke-width="0.8"/><circle cx="49.0" cy="56.6" r="1.9" fill="#9fb58e" stroke="#c8dab5" stroke-width="0.8"/><circle cx="73.0" cy="77.4" r="1.9" fill="#9fb58e" stroke="#c8dab5" stroke-width="0.8"/><circle cx="26.0" cy="103.0" r="1.9" fill="#9fb58e" stroke="#c8dab5" stroke-width="0.8"/><circle cx="12.4" cy="45.6" r="1.9" fill="#9fb58e" stroke="#c8dab5" stroke-width="0.8"/><circle cx="42.1" cy="7.0" r="1.9" fill="#9fb58e" stroke="#c8dab5" stroke-width="0.8"/><circle cx="56.5" cy="81.0" r="1.9" fill="#9fb58e" stroke="#c8dab5" stroke-width="0.8"/><circle cx="78.6" cy="51.4" r="1.9" fill="#9fb58e" stroke="#c8dab5" stroke-width="0.8"/><circle cx="56.1" cy="9.2" r="1.9" fill="#9fb58e" stroke="#c8dab5" stroke-width="0.8"/><circle cx="12.4" cy="9.0" r="1.9" fill="#9fb58e" stroke="#c8dab5" stroke-width="0.8"/><circle cx="72.7" cy="11.2" r="1.9" fill="#9fb58e" stroke="#c8dab5" stroke-width="0.8"/><circle cx="36.2" cy="39.6" r="1.9" fill="#9fb58e" stroke="#c8dab5" stroke-width="0.8"/><circle cx="73.7" cy="100.7" r="1.9" fill="#9fb58e" stroke="#c8dab5" stroke-width="0.8"/><circle cx="21.6" cy="26.8" r="1.9" fill="#9fb58e" stroke="#c8dab5" stroke-width="0.8"/><circle cx="48.3" cy="100.2" r="1.9" fill="#9fb58e" stroke="#c8dab5" stroke-width="0.8"/><circle cx="7.3" cy="94.8" r="1.9" fill="#9fb58e" stroke="#c8dab5" stroke-width="0.8"/><circle cx="66.8" cy="43.0" r="1.9" fill="#9fb58e" stroke="#c8dab5" stroke-width="0.8"/><circle cx="64.8" cy="57.3" r="1.9" fill="#9fb58e" stroke="#c8dab5" stroke-width="0.8"/><circle cx="19.3" cy="66.7" r="1.9" fill="#9fb58e" stroke="#c8dab5" stroke-width="0.8"/><circle cx="41.4" cy="69.6" r="1.9" fill="#9fb58e" stroke="#c8dab5" stroke-width="0.8"/><circle cx="41.2" cy="21.2" r="1.9" fill="#9fb58e" stroke="#c8dab5" stroke-width="0.8"/><circle cx="80.4" cy="25.4" r="1.9" fill="#9fb58e" stroke="#c8dab5" stroke-width="0.8"/><circle cx="4.6" cy="59.5" r="1.9" fill="#9fb58e" stroke="#c8dab5" stroke-width="0.8"/><circle cx="26.2" cy="54.0" r="1.9" fill="#9fb58e" stroke="#c8dab5" stroke-width="0.8"/><circle cx="4.5" cy="28.5" r="1.9" fill="#9fb58e" stroke="#c8dab5" stroke-width="0.8"/><circle cx="4.2" cy="77.8" r="1.9" fill="#9fb58e" stroke="#c8dab5" stroke-width="0.8"/><circle cx="52.8" cy="40.8" r="1.9" fill="#9fb58e" stroke="#c8dab5" stroke-width="0.8"/></pattern><pattern id="pDL" patternUnits="userSpaceOnUse" width="86" height="108" patternTransform="translate(363.6 121)"><rect width="86" height="108" fill="#637554"/><circle cx="39.1" cy="60.2" r="1.35" fill="#c0d2ad"/><circle cx="77.4" cy="50.5" r="1.35" fill="#c0d2ad"/><circle cx="17.5" cy="55.2" r="1.35" fill="#c0d2ad"/><circle cx="53.5" cy="84.2" r="1.35" fill="#c0d2ad"/><circle cx="10.1" cy="33.8" r="1.35" fill="#c0d2ad"/><circle cx="9.8" cy="85.9" r="1.35" fill="#c0d2ad"/><circle cx="58.7" cy="6.8" r="1.35" fill="#c0d2ad"/><circle cx="82.1" cy="101.9" r="1.35" fill="#c0d2ad"/><circle cx="55.5" cy="65.9" r="1.35" fill="#c0d2ad"/><circle cx="15.3" cy="4.0" r="1.35" fill="#c0d2ad"/><circle cx="45.3" cy="8.6" r="1.35" fill="#c0d2ad"/><circle cx="4.9" cy="50.3" r="1.35" fill="#c0d2ad"/><circle cx="38.2" cy="89.3" r="1.35" fill="#c0d2ad"/><circle cx="43.0" cy="70.7" r="1.35" fill="#c0d2ad"/><circle cx="39.5" cy="31.2" r="1.35" fill="#c0d2ad"/><circle cx="70.6" cy="75.4" r="1.35" fill="#c0d2ad"/><circle cx="28.0" cy="26.2" r="1.35" fill="#c0d2ad"/><circle cx="25.9" cy="9.7" r="1.35" fill="#c0d2ad"/><circle cx="64.6" cy="43.7" r="1.35" fill="#c0d2ad"/><circle cx="80.1" cy="89.8" r="1.35" fill="#c0d2ad"/><circle cx="2.5" cy="24.1" r="1.35" fill="#c0d2ad"/><circle cx="8.4" cy="67.3" r="1.35" fill="#c0d2ad"/><circle cx="65.6" cy="30.3" r="1.35" fill="#c0d2ad"/><circle cx="47.8" cy="48.6" r="1.35" fill="#c0d2ad"/><circle cx="17.9" cy="77.9" r="1.35" fill="#c0d2ad"/><circle cx="27.1" cy="93.6" r="1.35" fill="#c0d2ad"/><circle cx="19.6" cy="43.1" r="1.35" fill="#c0d2ad"/><circle cx="10.6" cy="104.4" r="1.35" fill="#c0d2ad"/><circle cx="32.6" cy="49.2" r="1.35" fill="#c0d2ad"/><circle cx="17.3" cy="18.4" r="1.35" fill="#c0d2ad"/><circle cx="62.4" cy="99.4" r="1.35" fill="#c0d2ad"/><circle cx="74.0" cy="64.7" r="1.35" fill="#c0d2ad"/><circle cx="50.8" cy="32.7" r="1.35" fill="#c0d2ad"/><circle cx="76.8" cy="23.5" r="1.35" fill="#c0d2ad"/><circle cx="3.9" cy="96.3" r="1.35" fill="#c0d2ad"/><circle cx="28.3" cy="105.4" r="1.35" fill="#c0d2ad"/><circle cx="31.0" cy="73.1" r="1.35" fill="#c0d2ad"/><circle cx="59.1" cy="53.7" r="1.35" fill="#c0d2ad"/><circle cx="73.2" cy="6.8" r="1.35" fill="#c0d2ad"/><circle cx="57.9" cy="23.0" r="1.35" fill="#c0d2ad"/><circle cx="75.6" cy="35.0" r="1.35" fill="#c0d2ad"/><circle cx="66.5" cy="15.5" r="1.35" fill="#c0d2ad"/><circle cx="44.9" cy="99.0" r="1.35" fill="#c0d2ad"/><circle cx="5.7" cy="8.8" r="1.35" fill="#c0d2ad"/><circle cx="36.6" cy="17.6" r="1.35" fill="#c0d2ad"/><circle cx="27.8" cy="59.0" r="1.35" fill="#c0d2ad"/><circle cx="64.6" cy="87.1" r="1.35" fill="#c0d2ad"/><circle cx="83.0" cy="72.5" r="1.35" fill="#c0d2ad"/><circle cx="83.0" cy="14.9" r="1.35" fill="#c0d2ad"/><circle cx="19.2" cy="67.3" r="1.35" fill="#c0d2ad"/><circle cx="36.0" cy="3.6" r="1.35" fill="#c0d2ad"/><circle cx="29.7" cy="38.2" r="1.35" fill="#c0d2ad"/></pattern><pattern id="pE" patternUnits="userSpaceOnUse" width="86" height="54"><rect width="86" height="54" fill="#3f6671"/><circle cx="43.4" cy="9.3" r="1.35" fill="#a3c3c2"/><circle cx="25.2" cy="28.1" r="1.35" fill="#a3c3c2"/><circle cx="77.9" cy="7.4" r="1.35" fill="#a3c3c2"/><circle cx="42.2" cy="42.2" r="1.35" fill="#a3c3c2"/><circle cx="12.4" cy="49.2" r="1.35" fill="#a3c3c2"/><circle cx="82.0" cy="26.1" r="1.35" fill="#a3c3c2"/><circle cx="33.8" cy="47.2" r="1.35" fill="#a3c3c2"/><circle cx="52.9" cy="43.2" r="1.35" fill="#a3c3c2"/><circle cx="71.4" cy="43.5" r="1.35" fill="#a3c3c2"/><circle cx="17.0" cy="12.9" r="1.35" fill="#a3c3c2"/><circle cx="34.8" cy="27.9" r="1.35" fill="#a3c3c2"/><circle cx="33.5" cy="8.2" r="1.35" fill="#a3c3c2"/><circle cx="22.3" cy="38.2" r="1.35" fill="#a3c3c2"/><circle cx="11.7" cy="32.0" r="1.35" fill="#a3c3c2"/><circle cx="47.1" cy="33.4" r="1.35" fill="#a3c3c2"/><circle cx="49.8" cy="23.3" r="1.35" fill="#a3c3c2"/><circle cx="66.0" cy="24.9" r="1.35" fill="#a3c3c2"/><circle cx="83.7" cy="38.6" r="1.35" fill="#a3c3c2"/><circle cx="68.8" cy="11.7" r="1.35" fill="#a3c3c2"/><circle cx="80.4" cy="47.8" r="1.35" fill="#a3c3c2"/><circle cx="23.7" cy="51.5" r="1.35" fill="#a3c3c2"/><circle cx="2.1" cy="3.7" r="1.35" fill="#a3c3c2"/><circle cx="23.7" cy="2.6" r="1.35" fill="#a3c3c2"/><circle cx="65.9" cy="2.6" r="1.35" fill="#a3c3c2"/><circle cx="5.2" cy="18.8" r="1.35" fill="#a3c3c2"/><circle cx="63.5" cy="36.8" r="1.35" fill="#a3c3c2"/><circle cx="53.1" cy="5.9" r="1.35" fill="#a3c3c2"/><circle cx="13.6" cy="3.4" r="1.35" fill="#a3c3c2"/><circle cx="62.8" cy="47.4" r="1.35" fill="#a3c3c2"/><circle cx="39.2" cy="17.7" r="1.35" fill="#a3c3c2"/></pattern><pattern id="pF" patternUnits="userSpaceOnUse" width="86" height="54"><rect width="86" height="54" fill="#f7caa4"/><circle cx="8.0" cy="6.0" r="6.0" fill="#a9c79b"/><rect x="6.5" y="-1.8" width="3.0" height="2.1" fill="#c9904f"/><circle cx="8.0" cy="6.0" r="3.7" fill="none" stroke="#cfe3c4" stroke-width="1.0"/><circle cx="8.0" cy="6.0" r="1.5" fill="#cfe3c4"/><circle cx="26.0" cy="4.0" r="5.0" fill="#d9d2cc"/><rect x="24.8" y="-2.5" width="2.5" height="1.8" fill="#c9904f"/><circle cx="28.5" cy="4.0" r="0.9" fill="#ffffff"/><circle cx="26.8" cy="6.4" r="0.9" fill="#ffffff"/><circle cx="24.0" cy="5.5" r="0.9" fill="#ffffff"/><circle cx="24.0" cy="2.5" r="0.9" fill="#ffffff"/><circle cx="26.8" cy="1.6" r="0.9" fill="#ffffff"/><circle cx="62.0" cy="10.0" r="8.0" fill="#8f4334"/><rect x="60.0" y="-0.4" width="4.0" height="2.8" fill="#c9904f"/><path d="M55.2 6.4q2.2 -1.6 4.5 0t4.5 0t4.5 0" stroke="#f6e8de" stroke-width="1.0" fill="none"/><path d="M55.2 10.0q2.2 -1.6 4.5 0t4.5 0t4.5 0" stroke="#f6e8de" stroke-width="1.0" fill="none"/><path d="M55.2 13.6q2.2 -1.6 4.5 0t4.5 0t4.5 0" stroke="#f6e8de" stroke-width="1.0" fill="none"/><circle cx="80.0" cy="4.0" r="5.0" fill="#a9c79b"/><rect x="78.8" y="-2.5" width="2.5" height="1.8" fill="#c9904f"/><circle cx="80.0" cy="4.0" r="3.1" fill="none" stroke="#cfe3c4" stroke-width="0.8"/><circle cx="80.0" cy="4.0" r="1.2" fill="#cfe3c4"/><circle cx="14.0" cy="28.0" r="9.0" fill="#c98a4c"/><rect x="11.8" y="16.3" width="4.5" height="3.1" fill="#c9904f"/><rect x="5.0" y="24.9" width="18.0" height="6.3" fill="#f5eadc"/><circle cx="44.0" cy="24.0" r="7.0" fill="#f2c5b2"/><rect x="42.2" y="14.9" width="3.5" height="2.4" fill="#c9904f"/><circle cx="47.5" cy="24.0" r="1.3" fill="#ffffff"/><circle cx="45.1" cy="27.3" r="1.3" fill="#ffffff"/><circle cx="41.2" cy="26.1" r="1.3" fill="#ffffff"/><circle cx="41.2" cy="21.9" r="1.3" fill="#ffffff"/><circle cx="45.1" cy="20.7" r="1.3" fill="#ffffff"/><circle cx="76.0" cy="30.0" r="8.0" fill="#a9d3e0"/><rect x="74.0" y="19.6" width="4.0" height="2.8" fill="#c9904f"/><path d="M69.2 26.4q2.2 -1.6 4.5 0t4.5 0t4.5 0" stroke="#f6e8de" stroke-width="1.0" fill="none"/><path d="M69.2 30.0q2.2 -1.6 4.5 0t4.5 0t4.5 0" stroke="#f6e8de" stroke-width="1.0" fill="none"/><path d="M69.2 33.6q2.2 -1.6 4.5 0t4.5 0t4.5 0" stroke="#f6e8de" stroke-width="1.0" fill="none"/><circle cx="36.0" cy="40.0" r="6.0" fill="#8f4334"/><rect x="34.5" y="32.2" width="3.0" height="2.1" fill="#c9904f"/><path d="M30.9 37.3q1.7 -1.2 3.4 0t3.4 0t3.4 0" stroke="#f6e8de" stroke-width="0.7" fill="none"/><path d="M30.9 40.0q1.7 -1.2 3.4 0t3.4 0t3.4 0" stroke="#f6e8de" stroke-width="0.7" fill="none"/><path d="M30.9 42.7q1.7 -1.2 3.4 0t3.4 0t3.4 0" stroke="#f6e8de" stroke-width="0.7" fill="none"/><circle cx="60.0" cy="44.0" r="9.0" fill="#f2a98a"/><rect x="57.8" y="32.3" width="4.5" height="3.1" fill="#c9904f"/><path d="M52.4 40.0q2.5 -1.8 5.0 0t5.0 0t5.0 0" stroke="#f6e8de" stroke-width="1.1" fill="none"/><path d="M52.4 44.0q2.5 -1.8 5.0 0t5.0 0t5.0 0" stroke="#f6e8de" stroke-width="1.1" fill="none"/><path d="M52.4 48.0q2.5 -1.8 5.0 0t5.0 0t5.0 0" stroke="#f6e8de" stroke-width="1.1" fill="none"/><circle cx="10.0" cy="50.0" r="6.0" fill="#f0c27e"/><rect x="8.5" y="42.2" width="3.0" height="2.1" fill="#c9904f"/><path d="M4.9 47.3q1.7 -1.2 3.4 0t3.4 0t3.4 0" stroke="#f6e8de" stroke-width="0.7" fill="none"/><path d="M4.9 50.0q1.7 -1.2 3.4 0t3.4 0t3.4 0" stroke="#f6e8de" stroke-width="0.7" fill="none"/><path d="M4.9 52.7q1.7 -1.2 3.4 0t3.4 0t3.4 0" stroke="#f6e8de" stroke-width="0.7" fill="none"/><circle cx="26.0" cy="48.0" r="5.0" fill="#d9d2cc"/><rect x="24.8" y="41.5" width="2.5" height="1.8" fill="#c9904f"/><circle cx="28.5" cy="48.0" r="0.9" fill="#ffffff"/><circle cx="26.8" cy="50.4" r="0.9" fill="#ffffff"/><circle cx="24.0" cy="49.5" r="0.9" fill="#ffffff"/><circle cx="24.0" cy="46.5" r="0.9" fill="#ffffff"/><circle cx="26.8" cy="45.6" r="0.9" fill="#ffffff"/><circle cx="46.0" cy="50.0" r="5.0" fill="#a9c79b"/><rect x="44.8" y="43.5" width="2.5" height="1.8" fill="#c9904f"/><circle cx="48.5" cy="50.0" r="0.9" fill="#ffffff"/><circle cx="46.8" cy="52.4" r="0.9" fill="#ffffff"/><circle cx="44.0" cy="51.5" r="0.9" fill="#ffffff"/><circle cx="44.0" cy="48.5" r="0.9" fill="#ffffff"/><circle cx="46.8" cy="47.6" r="0.9" fill="#ffffff"/><circle cx="84.0" cy="50.0" r="5.0" fill="#f2a98a"/><rect x="82.8" y="43.5" width="2.5" height="1.8" fill="#c9904f"/></pattern><pattern id="pI" patternUnits="userSpaceOnUse" width="9.6" height="9.6" patternTransform="translate(101 457)"><rect width="9.6" height="9.6" fill="#a9c79c"/><rect x="1.5" y="1.5" width="5" height="5" rx="1.8" fill="#5f7f58"/></pattern><pattern id="pJ" patternUnits="userSpaceOnUse" width="5.7" height="5.7" patternTransform="translate(364.5 457.7)"><rect width="5.7" height="5.7" fill="#c6e2e9"/><rect x="1.7" y="1.7" width="2.3" height="2.3" fill="#35636c"/></pattern></defs><rect x="99.05" y="121.00" width="84.40" height="107.20" rx="0" fill="url(#pAL)" /><rect x="187.30" y="121.00" width="84.40" height="107.20" rx="0" fill="url(#pB)" /><clipPath id="oc1"><rect x="275.50" y="121.00" width="84.40" height="107.20" rx="0"/></clipPath><g clip-path="url(#oc1)"><rect x="275.50" y="121.00" width="84.40" height="107.20" fill="#2f5a66"/><circle cx="288.1" cy="123.9" r="7.0" fill="#f0a88a"/><rect x="286.4" y="114.8" width="3.5" height="2.4" fill="#c9904f"/><path d="M282.2 120.8q2.0 -1.4 3.9 0t3.9 0t3.9 0" stroke="#f6e8de" stroke-width="0.8" fill="none"/><path d="M282.2 123.9q2.0 -1.4 3.9 0t3.9 0t3.9 0" stroke="#f6e8de" stroke-width="0.8" fill="none"/><path d="M282.2 127.1q2.0 -1.4 3.9 0t3.9 0t3.9 0" stroke="#f6e8de" stroke-width="0.8" fill="none"/><circle cx="308.5" cy="129.7" r="8.5" fill="#86a77a"/><rect x="306.4" y="118.6" width="4.2" height="3.0" fill="#c9904f"/><circle cx="308.5" cy="129.7" r="5.3" fill="none" stroke="#cfe3c4" stroke-width="1.4"/><circle cx="308.5" cy="129.7" r="2.1" fill="#cfe3c4"/><circle cx="325.0" cy="126.8" r="6.5" fill="#d6d0cc"/><rect x="323.4" y="118.3" width="3.2" height="2.3" fill="#c9904f"/><circle cx="328.2" cy="126.8" r="1.2" fill="#ffffff"/><circle cx="326.0" cy="129.9" r="1.2" fill="#ffffff"/><circle cx="322.4" cy="128.7" r="1.2" fill="#ffffff"/><circle cx="322.4" cy="124.9" r="1.2" fill="#ffffff"/><circle cx="326.0" cy="123.7" r="1.2" fill="#ffffff"/><circle cx="339.5" cy="123.9" r="5.0" fill="#f0c27e"/><rect x="338.2" y="117.4" width="2.5" height="1.8" fill="#c9904f"/><circle cx="356.1" cy="127.8" r="5.0" fill="#a9c79b"/><rect x="354.9" y="121.3" width="2.5" height="1.8" fill="#c9904f"/><circle cx="290.1" cy="135.6" r="5.5" fill="#d6d0cc"/><rect x="288.7" y="128.4" width="2.8" height="1.9" fill="#c9904f"/><circle cx="292.9" cy="135.6" r="1.0" fill="#ffffff"/><circle cx="291.0" cy="138.2" r="1.0" fill="#ffffff"/><circle cx="287.9" cy="137.2" r="1.0" fill="#ffffff"/><circle cx="287.9" cy="134.0" r="1.0" fill="#ffffff"/><circle cx="290.9" cy="133.0" r="1.0" fill="#ffffff"/><circle cx="340.5" cy="138.5" r="9.0" fill="#8d4536"/><rect x="338.2" y="126.8" width="4.5" height="3.1" fill="#c9904f"/><path d="M332.9 134.4q2.5 -1.8 5.0 0t5.0 0t5.0 0" stroke="#f6e8de" stroke-width="1.1" fill="none"/><path d="M332.9 138.5q2.5 -1.8 5.0 0t5.0 0t5.0 0" stroke="#f6e8de" stroke-width="1.1" fill="none"/><path d="M332.9 142.6q2.5 -1.8 5.0 0t5.0 0t5.0 0" stroke="#f6e8de" stroke-width="1.1" fill="none"/><circle cx="277.5" cy="142.0" r="6.0" fill="#f3c6b1"/><rect x="276.0" y="134.2" width="3.0" height="2.1" fill="#c9904f"/><circle cx="321.1" cy="147.2" r="8.5" fill="#a9d3e0"/><rect x="319.0" y="136.1" width="4.2" height="3.0" fill="#c9904f"/><path d="M313.9 143.4q2.4 -1.7 4.8 0t4.8 0t4.8 0" stroke="#f6e8de" stroke-width="1.0" fill="none"/><path d="M313.9 147.2q2.4 -1.7 4.8 0t4.8 0t4.8 0" stroke="#f6e8de" stroke-width="1.0" fill="none"/><path d="M313.9 151.0q2.4 -1.7 4.8 0t4.8 0t4.8 0" stroke="#f6e8de" stroke-width="1.0" fill="none"/><circle cx="298.8" cy="151.0" r="9.5" fill="#b9824e"/><rect x="296.4" y="138.7" width="4.8" height="3.3" fill="#c9904f"/><rect x="289.3" y="147.7" width="19.0" height="6.6" fill="#f5eadc"/><circle cx="356.1" cy="143.3" r="6.5" fill="#f3c6b1"/><rect x="354.5" y="134.9" width="3.2" height="2.3" fill="#c9904f"/><circle cx="337.5" cy="155.0" r="7.0" fill="#f3c6b1"/><rect x="335.8" y="145.9" width="3.5" height="2.4" fill="#c9904f"/><circle cx="348.3" cy="159.9" r="4.0" fill="#f0c27e"/><rect x="347.3" y="154.7" width="2.0" height="1.4" fill="#c9904f"/><circle cx="278.4" cy="159.9" r="5.0" fill="#8d4536"/><rect x="277.1" y="153.4" width="2.5" height="1.8" fill="#c9904f"/><path d="M274.1 157.7q1.4 -1.0 2.8 0t2.8 0t2.8 0" stroke="#f6e8de" stroke-width="0.6" fill="none"/><path d="M274.1 159.9q1.4 -1.0 2.8 0t2.8 0t2.8 0" stroke="#f6e8de" stroke-width="0.6" fill="none"/><path d="M274.1 162.2q1.4 -1.0 2.8 0t2.8 0t2.8 0" stroke="#f6e8de" stroke-width="0.6" fill="none"/><circle cx="287.2" cy="167.6" r="5.0" fill="#a9d3e0"/><rect x="285.9" y="161.1" width="2.5" height="1.8" fill="#c9904f"/><circle cx="301.7" cy="171.5" r="6.5" fill="#f0c27e"/><rect x="300.1" y="163.1" width="3.2" height="2.3" fill="#c9904f"/><path d="M296.2 168.6q1.8 -1.3 3.6 0t3.6 0t3.6 0" stroke="#f6e8de" stroke-width="0.8" fill="none"/><path d="M296.2 171.5q1.8 -1.3 3.6 0t3.6 0t3.6 0" stroke="#f6e8de" stroke-width="0.8" fill="none"/><path d="M296.2 174.4q1.8 -1.3 3.6 0t3.6 0t3.6 0" stroke="#f6e8de" stroke-width="0.8" fill="none"/><circle cx="320.2" cy="169.6" r="10.0" fill="#f0a88a"/><rect x="317.7" y="156.6" width="5.0" height="3.5" fill="#c9904f"/><path d="M311.7 165.1q2.8 -2.0 5.6 0t5.6 0t5.6 0" stroke="#f6e8de" stroke-width="1.2" fill="none"/><path d="M311.7 169.6q2.8 -2.0 5.6 0t5.6 0t5.6 0" stroke="#f6e8de" stroke-width="1.2" fill="none"/><path d="M311.7 174.1q2.8 -2.0 5.6 0t5.6 0t5.6 0" stroke="#f6e8de" stroke-width="1.2" fill="none"/><circle cx="344.5" cy="170.5" r="7.5" fill="#a9c79b"/><rect x="342.6" y="160.8" width="3.8" height="2.6" fill="#c9904f"/><circle cx="348.2" cy="170.5" r="1.3" fill="#ffffff"/><circle cx="345.7" cy="174.1" r="1.3" fill="#ffffff"/><circle cx="341.5" cy="172.7" r="1.3" fill="#ffffff"/><circle cx="341.5" cy="168.3" r="1.3" fill="#ffffff"/><circle cx="345.6" cy="166.9" r="1.3" fill="#ffffff"/><circle cx="356.1" cy="179.3" r="7.0" fill="#d6d0cc"/><rect x="354.4" y="170.2" width="3.5" height="2.4" fill="#c9904f"/><circle cx="359.6" cy="179.3" r="1.3" fill="#ffffff"/><circle cx="357.2" cy="182.6" r="1.3" fill="#ffffff"/><circle cx="353.3" cy="181.4" r="1.3" fill="#ffffff"/><circle cx="353.3" cy="177.2" r="1.3" fill="#ffffff"/><circle cx="357.2" cy="176.0" r="1.3" fill="#ffffff"/><circle cx="278.4" cy="179.3" r="7.0" fill="#d6d0cc"/><rect x="276.6" y="170.2" width="3.5" height="2.4" fill="#c9904f"/><circle cx="281.9" cy="179.3" r="1.3" fill="#ffffff"/><circle cx="279.5" cy="182.6" r="1.3" fill="#ffffff"/><circle cx="275.6" cy="181.4" r="1.3" fill="#ffffff"/><circle cx="275.6" cy="177.2" r="1.3" fill="#ffffff"/><circle cx="279.5" cy="176.0" r="1.3" fill="#ffffff"/><circle cx="292.0" cy="182.2" r="6.5" fill="#8d4536"/><rect x="290.4" y="173.8" width="3.2" height="2.3" fill="#c9904f"/><path d="M286.5 179.3q1.8 -1.3 3.6 0t3.6 0t3.6 0" stroke="#f6e8de" stroke-width="0.8" fill="none"/><path d="M286.5 182.2q1.8 -1.3 3.6 0t3.6 0t3.6 0" stroke="#f6e8de" stroke-width="0.8" fill="none"/><path d="M286.5 185.1q1.8 -1.3 3.6 0t3.6 0t3.6 0" stroke="#f6e8de" stroke-width="0.8" fill="none"/><circle cx="305.5" cy="189.0" r="8.5" fill="#f3c6b1"/><rect x="303.4" y="177.9" width="4.2" height="3.0" fill="#c9904f"/><circle cx="326.0" cy="194.8" r="7.0" fill="#86a77a"/><rect x="324.2" y="185.7" width="3.5" height="2.4" fill="#c9904f"/><circle cx="326.0" cy="194.8" r="4.3" fill="none" stroke="#cfe3c4" stroke-width="1.1"/><circle cx="326.0" cy="194.8" r="1.8" fill="#cfe3c4"/><circle cx="341.5" cy="189.0" r="8.0" fill="#b9824e"/><rect x="339.5" y="178.6" width="4.0" height="2.8" fill="#c9904f"/><rect x="333.5" y="186.2" width="16.0" height="5.6" fill="#f5eadc"/><circle cx="287.2" cy="202.6" r="9.5" fill="#f0a88a"/><rect x="284.8" y="190.2" width="4.8" height="3.3" fill="#c9904f"/><path d="M279.1 198.3q2.7 -1.9 5.3 0t5.3 0t5.3 0" stroke="#f6e8de" stroke-width="1.1" fill="none"/><path d="M279.1 202.6q2.7 -1.9 5.3 0t5.3 0t5.3 0" stroke="#f6e8de" stroke-width="1.1" fill="none"/><path d="M279.1 206.9q2.7 -1.9 5.3 0t5.3 0t5.3 0" stroke="#f6e8de" stroke-width="1.1" fill="none"/><circle cx="354.2" cy="200.6" r="7.0" fill="#a9d3e0"/><rect x="352.4" y="191.5" width="3.5" height="2.4" fill="#c9904f"/><path d="M348.2 197.4q2.0 -1.4 3.9 0t3.9 0t3.9 0" stroke="#f6e8de" stroke-width="0.8" fill="none"/><path d="M348.2 200.6q2.0 -1.4 3.9 0t3.9 0t3.9 0" stroke="#f6e8de" stroke-width="0.8" fill="none"/><path d="M348.2 203.8q2.0 -1.4 3.9 0t3.9 0t3.9 0" stroke="#f6e8de" stroke-width="0.8" fill="none"/><circle cx="339.5" cy="206.5" r="5.5" fill="#f0c27e"/><rect x="338.1" y="199.3" width="2.8" height="1.9" fill="#c9904f"/><path d="M334.8 204.0q1.5 -1.1 3.1 0t3.1 0t3.1 0" stroke="#f6e8de" stroke-width="0.7" fill="none"/><path d="M334.8 206.5q1.5 -1.1 3.1 0t3.1 0t3.1 0" stroke="#f6e8de" stroke-width="0.7" fill="none"/><path d="M334.8 209.0q1.5 -1.1 3.1 0t3.1 0t3.1 0" stroke="#f6e8de" stroke-width="0.7" fill="none"/><circle cx="307.5" cy="215.0" r="8.5" fill="#86a77a"/><rect x="305.4" y="203.9" width="4.2" height="3.0" fill="#c9904f"/><circle cx="307.5" cy="215.0" r="5.3" fill="none" stroke="#cfe3c4" stroke-width="1.4"/><circle cx="307.5" cy="215.0" r="2.1" fill="#cfe3c4"/><circle cx="325.0" cy="211.3" r="7.0" fill="#d6d0cc"/><rect x="323.2" y="202.2" width="3.5" height="2.4" fill="#c9904f"/><circle cx="328.5" cy="211.3" r="1.3" fill="#ffffff"/><circle cx="326.1" cy="214.6" r="1.3" fill="#ffffff"/><circle cx="322.2" cy="213.4" r="1.3" fill="#ffffff"/><circle cx="322.2" cy="209.2" r="1.3" fill="#ffffff"/><circle cx="326.1" cy="208.0" r="1.3" fill="#ffffff"/><circle cx="291.0" cy="220.0" r="6.0" fill="#d6d0cc"/><rect x="289.5" y="212.2" width="3.0" height="2.1" fill="#c9904f"/><circle cx="294.0" cy="220.0" r="1.1" fill="#ffffff"/><circle cx="291.9" cy="222.9" r="1.1" fill="#ffffff"/><circle cx="288.6" cy="221.8" r="1.1" fill="#ffffff"/><circle cx="288.6" cy="218.2" r="1.1" fill="#ffffff"/><circle cx="291.9" cy="217.1" r="1.1" fill="#ffffff"/><circle cx="340.5" cy="220.0" r="8.0" fill="#8d4536"/><rect x="338.5" y="209.6" width="4.0" height="2.8" fill="#c9904f"/><path d="M333.7 216.4q2.2 -1.6 4.5 0t4.5 0t4.5 0" stroke="#f6e8de" stroke-width="1.0" fill="none"/><path d="M333.7 220.0q2.2 -1.6 4.5 0t4.5 0t4.5 0" stroke="#f6e8de" stroke-width="1.0" fill="none"/><path d="M333.7 223.6q2.2 -1.6 4.5 0t4.5 0t4.5 0" stroke="#f6e8de" stroke-width="1.0" fill="none"/><circle cx="356.1" cy="214.0" r="5.0" fill="#a9c79b"/><rect x="354.9" y="207.5" width="2.5" height="1.8" fill="#c9904f"/><circle cx="320.2" cy="227.8" r="6.0" fill="#a9d3e0"/><rect x="318.7" y="220.0" width="3.0" height="2.1" fill="#c9904f"/></g><rect x="363.60" y="121.00" width="84.40" height="107.20" rx="0" fill="url(#pDL)" /><rect x="99.05" y="231.80" width="84.40" height="106.50" rx="0" fill="#6d8a6c" /><rect x="102.05" y="234.80" width="78.40" height="100.50" rx="0" fill="#fff" /><rect x="187.30" y="231.80" width="84.40" height="106.50" rx="0" fill="#1b5458" /><rect x="190.30" y="234.80" width="78.40" height="100.50" rx="0" fill="#fff" /><rect x="275.50" y="231.80" width="84.40" height="106.50" rx="0" fill="#fde6c6" /><rect x="278.50" y="234.80" width="78.40" height="100.50" rx="0" fill="#fff" /><rect x="363.60" y="231.80" width="84.40" height="106.50" rx="0" fill="#d6ecee" /><rect x="366.60" y="234.80" width="78.40" height="100.50" rx="0" fill="#fff" /><rect x="99.05" y="342.60" width="84.40" height="53.20" rx="10" fill="url(#pE)" /><clipPath id="oc2"><rect x="187.30" y="342.60" width="84.40" height="53.20" rx="10"/></clipPath><g clip-path="url(#oc2)"><rect x="187.30" y="342.60" width="84.40" height="53.20" fill="#f8cba4"/><circle cx="193.2" cy="350.1" r="6.5" fill="#7f9f73"/><rect x="191.6" y="341.7" width="3.2" height="2.3" fill="#c9904f"/><circle cx="193.2" cy="350.1" r="4.0" fill="none" stroke="#cfe3c4" stroke-width="1.0"/><circle cx="193.2" cy="350.1" r="1.6" fill="#cfe3c4"/><circle cx="208.1" cy="353.8" r="5.0" fill="#d6d0cc"/><rect x="206.9" y="347.3" width="2.5" height="1.8" fill="#c9904f"/><circle cx="210.6" cy="353.8" r="0.9" fill="#ffffff"/><circle cx="208.9" cy="356.2" r="0.9" fill="#ffffff"/><circle cx="206.1" cy="355.3" r="0.9" fill="#ffffff"/><circle cx="206.1" cy="352.3" r="0.9" fill="#ffffff"/><circle cx="208.9" cy="351.4" r="0.9" fill="#ffffff"/><circle cx="222.0" cy="347.4" r="5.0" fill="#b6d4b0"/><rect x="220.8" y="340.9" width="2.5" height="1.8" fill="#c9904f"/><circle cx="224.5" cy="347.4" r="0.9" fill="#ffffff"/><circle cx="222.8" cy="349.8" r="0.9" fill="#ffffff"/><circle cx="220.0" cy="348.9" r="0.9" fill="#ffffff"/><circle cx="220.0" cy="345.9" r="0.9" fill="#ffffff"/><circle cx="222.8" cy="345.0" r="0.9" fill="#ffffff"/><circle cx="240.7" cy="355.4" r="8.5" fill="#8d4536"/><rect x="238.6" y="344.4" width="4.2" height="3.0" fill="#c9904f"/><path d="M233.5 351.6q2.4 -1.7 4.8 0t4.8 0t4.8 0" stroke="#f6e8de" stroke-width="1.0" fill="none"/><path d="M233.5 355.4q2.4 -1.7 4.8 0t4.8 0t4.8 0" stroke="#f6e8de" stroke-width="1.0" fill="none"/><path d="M233.5 359.2q2.4 -1.7 4.8 0t4.8 0t4.8 0" stroke="#f6e8de" stroke-width="1.0" fill="none"/><circle cx="255.7" cy="346.9" r="5.0" fill="#d6d0cc"/><rect x="254.5" y="340.4" width="2.5" height="1.8" fill="#c9904f"/><circle cx="258.2" cy="346.9" r="0.9" fill="#ffffff"/><circle cx="256.5" cy="349.3" r="0.9" fill="#ffffff"/><circle cx="253.7" cy="348.4" r="0.9" fill="#ffffff"/><circle cx="253.7" cy="345.4" r="0.9" fill="#ffffff"/><circle cx="256.5" cy="344.5" r="0.9" fill="#ffffff"/><circle cx="269.6" cy="350.6" r="6.5" fill="#7f9f73"/><rect x="268.0" y="342.2" width="3.2" height="2.3" fill="#c9904f"/><circle cx="269.6" cy="350.6" r="4.0" fill="none" stroke="#cfe3c4" stroke-width="1.0"/><circle cx="269.6" cy="350.6" r="1.6" fill="#cfe3c4"/><circle cx="222.3" cy="360.6" r="8.0" fill="#f3c6b1"/><rect x="220.3" y="350.2" width="4.0" height="2.8" fill="#c9904f"/><circle cx="200.1" cy="368.2" r="9.0" fill="#b9824e"/><rect x="197.9" y="356.5" width="4.5" height="3.1" fill="#c9904f"/><rect x="191.1" y="365.1" width="18.0" height="6.3" fill="#f5eadc"/><circle cx="258.9" cy="365.0" r="8.0" fill="#a9d3e0"/><rect x="256.9" y="354.6" width="4.0" height="2.8" fill="#c9904f"/><path d="M252.1 361.4q2.2 -1.6 4.5 0t4.5 0t4.5 0" stroke="#f6e8de" stroke-width="1.0" fill="none"/><path d="M252.1 365.0q2.2 -1.6 4.5 0t4.5 0t4.5 0" stroke="#f6e8de" stroke-width="1.0" fill="none"/><path d="M252.1 368.6q2.2 -1.6 4.5 0t4.5 0t4.5 0" stroke="#f6e8de" stroke-width="1.0" fill="none"/><circle cx="243.9" cy="371.4" r="6.0" fill="#f3c6b1"/><rect x="242.4" y="363.6" width="3.0" height="2.1" fill="#c9904f"/><circle cx="219.9" cy="376.3" r="4.0" fill="#8d4536"/><rect x="218.9" y="371.1" width="2.0" height="1.4" fill="#c9904f"/><path d="M216.5 374.5q1.1 -0.8 2.2 0t2.2 0t2.2 0" stroke="#f6e8de" stroke-width="0.6" fill="none"/><path d="M216.5 376.3q1.1 -0.8 2.2 0t2.2 0t2.2 0" stroke="#f6e8de" stroke-width="0.6" fill="none"/><path d="M216.5 378.1q1.1 -0.8 2.2 0t2.2 0t2.2 0" stroke="#f6e8de" stroke-width="0.6" fill="none"/><circle cx="211.9" cy="384.3" r="4.5" fill="#a9d3e0"/><rect x="210.8" y="378.4" width="2.2" height="1.6" fill="#c9904f"/><circle cx="258.9" cy="385.3" r="9.5" fill="#f0a88a"/><rect x="256.5" y="372.9" width="4.8" height="3.3" fill="#c9904f"/><path d="M250.8 381.0q2.7 -1.9 5.3 0t5.3 0t5.3 0" stroke="#f6e8de" stroke-width="1.1" fill="none"/><path d="M250.8 385.3q2.7 -1.9 5.3 0t5.3 0t5.3 0" stroke="#f6e8de" stroke-width="1.1" fill="none"/><path d="M250.8 389.6q2.7 -1.9 5.3 0t5.3 0t5.3 0" stroke="#f6e8de" stroke-width="1.1" fill="none"/><circle cx="239.1" cy="386.9" r="6.0" fill="#b6d4b0"/><rect x="237.6" y="379.1" width="3.0" height="2.1" fill="#c9904f"/><circle cx="242.1" cy="386.9" r="1.1" fill="#ffffff"/><circle cx="240.0" cy="389.8" r="1.1" fill="#ffffff"/><circle cx="236.7" cy="388.7" r="1.1" fill="#ffffff"/><circle cx="236.7" cy="385.1" r="1.1" fill="#ffffff"/><circle cx="240.0" cy="384.0" r="1.1" fill="#ffffff"/><circle cx="222.6" cy="391.6" r="6.0" fill="#d6d0cc"/><rect x="221.1" y="383.8" width="3.0" height="2.1" fill="#c9904f"/><circle cx="225.6" cy="391.6" r="1.1" fill="#ffffff"/><circle cx="223.5" cy="394.5" r="1.1" fill="#ffffff"/><circle cx="220.2" cy="393.4" r="1.1" fill="#ffffff"/><circle cx="220.2" cy="389.8" r="1.1" fill="#ffffff"/><circle cx="223.5" cy="388.7" r="1.1" fill="#ffffff"/><circle cx="196.9" cy="387.5" r="6.0" fill="#f0c27e"/><rect x="195.4" y="379.7" width="3.0" height="2.1" fill="#c9904f"/><path d="M191.8 384.8q1.7 -1.2 3.4 0t3.4 0t3.4 0" stroke="#f6e8de" stroke-width="0.7" fill="none"/><path d="M191.8 387.5q1.7 -1.2 3.4 0t3.4 0t3.4 0" stroke="#f6e8de" stroke-width="0.7" fill="none"/><path d="M191.8 390.2q1.7 -1.2 3.4 0t3.4 0t3.4 0" stroke="#f6e8de" stroke-width="0.7" fill="none"/><circle cx="205.3" cy="394.6" r="5.0" fill="#8d4536"/><rect x="204.1" y="388.1" width="2.5" height="1.8" fill="#c9904f"/></g><rect x="275.50" y="342.60" width="84.40" height="53.20" rx="0" fill="url(#pG)" /><clipPath id="oc3"><rect x="363.60" y="342.60" width="84.40" height="53.20" rx="0"/></clipPath><g clip-path="url(#oc3)"><rect x="363.60" y="342.60" width="84.40" height="53.20" fill="#fdfbf8"/><circle cx="371.8" cy="350.4" r="9.0" fill="#f0a88a"/><rect x="369.6" y="338.7" width="4.5" height="3.1" fill="#c9904f"/><path d="M364.2 346.4q2.5 -1.8 5.0 0t5.0 0t5.0 0" stroke="#f6e8de" stroke-width="1.1" fill="none"/><path d="M364.2 350.4q2.5 -1.8 5.0 0t5.0 0t5.0 0" stroke="#f6e8de" stroke-width="1.1" fill="none"/><path d="M364.2 354.5q2.5 -1.8 5.0 0t5.0 0t5.0 0" stroke="#f6e8de" stroke-width="1.1" fill="none"/><circle cx="391.6" cy="347.3" r="7.0" fill="#b6d4b0"/><rect x="389.9" y="338.2" width="3.5" height="2.4" fill="#c9904f"/><circle cx="395.1" cy="347.3" r="1.3" fill="#ffffff"/><circle cx="392.7" cy="350.6" r="1.3" fill="#ffffff"/><circle cx="388.8" cy="349.4" r="1.3" fill="#ffffff"/><circle cx="388.8" cy="345.2" r="1.3" fill="#ffffff"/><circle cx="392.7" cy="344.0" r="1.3" fill="#ffffff"/><circle cx="414.6" cy="345.8" r="5.0" fill="#d6d0cc"/><rect x="413.4" y="339.3" width="2.5" height="1.8" fill="#c9904f"/><circle cx="417.1" cy="345.8" r="0.9" fill="#ffffff"/><circle cx="415.4" cy="348.2" r="0.9" fill="#ffffff"/><circle cx="412.6" cy="347.3" r="0.9" fill="#ffffff"/><circle cx="412.6" cy="344.3" r="0.9" fill="#ffffff"/><circle cx="415.4" cy="343.4" r="0.9" fill="#ffffff"/><circle cx="428.6" cy="348.9" r="7.0" fill="#a9d3e0"/><rect x="426.9" y="339.8" width="3.5" height="2.4" fill="#c9904f"/><path d="M422.7 345.8q2.0 -1.4 3.9 0t3.9 0t3.9 0" stroke="#f6e8de" stroke-width="0.8" fill="none"/><path d="M422.7 348.9q2.0 -1.4 3.9 0t3.9 0t3.9 0" stroke="#f6e8de" stroke-width="0.8" fill="none"/><path d="M422.7 352.1q2.0 -1.4 3.9 0t3.9 0t3.9 0" stroke="#f6e8de" stroke-width="0.8" fill="none"/><circle cx="444.2" cy="345.6" r="5.0" fill="#f0c27e"/><rect x="443.0" y="339.1" width="2.5" height="1.8" fill="#c9904f"/><path d="M440.0 343.4q1.4 -1.0 2.8 0t2.8 0t2.8 0" stroke="#f6e8de" stroke-width="0.6" fill="none"/><path d="M440.0 345.6q1.4 -1.0 2.8 0t2.8 0t2.8 0" stroke="#f6e8de" stroke-width="0.6" fill="none"/><path d="M440.0 347.9q1.4 -1.0 2.8 0t2.8 0t2.8 0" stroke="#f6e8de" stroke-width="0.6" fill="none"/><circle cx="385.6" cy="364.3" r="8.0" fill="#f3c6b1"/><rect x="383.6" y="353.9" width="4.0" height="2.8" fill="#c9904f"/><circle cx="401.1" cy="358.1" r="5.0" fill="#f0c27e"/><rect x="399.9" y="351.6" width="2.5" height="1.8" fill="#c9904f"/><circle cx="418.6" cy="358.1" r="5.0" fill="#8d4536"/><rect x="417.4" y="351.6" width="2.5" height="1.8" fill="#c9904f"/><path d="M414.4 355.9q1.4 -1.0 2.8 0t2.8 0t2.8 0" stroke="#f6e8de" stroke-width="0.6" fill="none"/><path d="M414.4 358.1q1.4 -1.0 2.8 0t2.8 0t2.8 0" stroke="#f6e8de" stroke-width="0.6" fill="none"/><path d="M414.4 360.4q1.4 -1.0 2.8 0t2.8 0t2.8 0" stroke="#f6e8de" stroke-width="0.6" fill="none"/><circle cx="441.1" cy="370.6" r="10.0" fill="#b9824e"/><rect x="438.6" y="357.6" width="5.0" height="3.5" fill="#c9904f"/><rect x="431.1" y="367.1" width="20.0" height="7.0" fill="#f5eadc"/><circle cx="368.6" cy="375.1" r="9.0" fill="#a9d3e0"/><rect x="366.4" y="363.4" width="4.5" height="3.1" fill="#c9904f"/><path d="M361.0 371.1q2.5 -1.8 5.0 0t5.0 0t5.0 0" stroke="#f6e8de" stroke-width="1.1" fill="none"/><path d="M361.0 375.1q2.5 -1.8 5.0 0t5.0 0t5.0 0" stroke="#f6e8de" stroke-width="1.1" fill="none"/><path d="M361.0 379.2q2.5 -1.8 5.0 0t5.0 0t5.0 0" stroke="#f6e8de" stroke-width="1.1" fill="none"/><circle cx="388.6" cy="385.9" r="10.0" fill="#8d4536"/><rect x="386.1" y="372.9" width="5.0" height="3.5" fill="#c9904f"/><path d="M380.1 381.4q2.8 -2.0 5.6 0t5.6 0t5.6 0" stroke="#f6e8de" stroke-width="1.2" fill="none"/><path d="M380.1 385.9q2.8 -2.0 5.6 0t5.6 0t5.6 0" stroke="#f6e8de" stroke-width="1.2" fill="none"/><path d="M380.1 390.4q2.8 -2.0 5.6 0t5.6 0t5.6 0" stroke="#f6e8de" stroke-width="1.2" fill="none"/><circle cx="414.6" cy="379.7" r="9.0" fill="#f3c6b1"/><rect x="412.4" y="368.0" width="4.5" height="3.1" fill="#c9904f"/><circle cx="433.1" cy="388.6" r="6.0" fill="#d6d0cc"/><rect x="431.6" y="380.8" width="3.0" height="2.1" fill="#c9904f"/><circle cx="436.1" cy="388.6" r="1.1" fill="#ffffff"/><circle cx="434.0" cy="391.5" r="1.1" fill="#ffffff"/><circle cx="430.7" cy="390.4" r="1.1" fill="#ffffff"/><circle cx="430.7" cy="386.8" r="1.1" fill="#ffffff"/><circle cx="434.0" cy="385.7" r="1.1" fill="#ffffff"/></g><rect x="99.05" y="400.20" width="84.40" height="52.80" rx="8" fill="#fde7c9" /><rect x="187.30" y="400.20" width="84.40" height="52.80" rx="8" fill="#d6ecee" /><rect x="275.50" y="400.20" width="84.40" height="52.80" rx="0" fill="#195458" /><rect x="363.60" y="400.20" width="84.40" height="52.80" rx="0" fill="#6c8a6a" /><rect x="99.05" y="457.20" width="84.40" height="53.00" rx="10" fill="#a9c89c" /><rect x="103.65" y="461.80" width="75.20" height="43.80" rx="5.4" fill="#fff" /><rect x="117.8" y="457.6" width="5.4" height="4" rx="1.5" fill="#5f7f58"/><rect x="117.8" y="506.0" width="5.4" height="4" rx="1.5" fill="#5f7f58"/><rect x="134.0" y="457.6" width="5.4" height="4" rx="1.5" fill="#5f7f58"/><rect x="134.0" y="506.0" width="5.4" height="4" rx="1.5" fill="#5f7f58"/><rect x="150.0" y="457.6" width="5.4" height="4" rx="1.5" fill="#5f7f58"/><rect x="150.0" y="506.0" width="5.4" height="4" rx="1.5" fill="#5f7f58"/><rect x="166.8" y="457.6" width="5.4" height="4" rx="1.5" fill="#5f7f58"/><rect x="166.8" y="506.0" width="5.4" height="4" rx="1.5" fill="#5f7f58"/><rect x="99.5" y="473.9" width="4" height="5.4" rx="1.5" fill="#5f7f58"/><rect x="99.5" y="489.6" width="4" height="5.4" rx="1.5" fill="#5f7f58"/><rect x="179.5" y="463.3" width="4" height="5.4" rx="1.5" fill="#5f7f58"/><rect x="179.5" y="480.3" width="4" height="5.4" rx="1.5" fill="#5f7f58"/><rect x="179.5" y="497.3" width="4" height="5.4" rx="1.5" fill="#5f7f58"/><rect x="187.30" y="457.20" width="84.40" height="53.00" rx="9.5" fill="#bb8049" /><rect x="190.90" y="460.80" width="77.20" height="45.80" rx="5.9" fill="#fff" /><rect x="275.50" y="457.20" width="84.40" height="53.00" rx="0" fill="url(#pA5)" /><rect x="279.10" y="460.80" width="77.20" height="45.80" rx="0" fill="#fff" /><rect x="363.60" y="457.20" width="84.40" height="53.00" rx="0" fill="#c6e2e9" /><rect x="367.60" y="461.20" width="76.40" height="45.00" rx="0" fill="#fff" /><rect x="364.45" y="458.05" width="2.3" height="2.3" fill="#35636c"/><rect x="364.45" y="507.05" width="2.3" height="2.3" fill="#35636c"/><rect x="370.19" y="458.05" width="2.3" height="2.3" fill="#35636c"/><rect x="370.19" y="507.05" width="2.3" height="2.3" fill="#35636c"/><rect x="375.94" y="458.05" width="2.3" height="2.3" fill="#35636c"/><rect x="375.94" y="507.05" width="2.3" height="2.3" fill="#35636c"/><rect x="381.68" y="458.05" width="2.3" height="2.3" fill="#35636c"/><rect x="381.68" y="507.05" width="2.3" height="2.3" fill="#35636c"/><rect x="387.42" y="458.05" width="2.3" height="2.3" fill="#35636c"/><rect x="387.42" y="507.05" width="2.3" height="2.3" fill="#35636c"/><rect x="393.16" y="458.05" width="2.3" height="2.3" fill="#35636c"/><rect x="393.16" y="507.05" width="2.3" height="2.3" fill="#35636c"/><rect x="398.91" y="458.05" width="2.3" height="2.3" fill="#35636c"/><rect x="398.91" y="507.05" width="2.3" height="2.3" fill="#35636c"/><rect x="404.65" y="458.05" width="2.3" height="2.3" fill="#35636c"/><rect x="404.65" y="507.05" width="2.3" height="2.3" fill="#35636c"/><rect x="410.39" y="458.05" width="2.3" height="2.3" fill="#35636c"/><rect x="410.39" y="507.05" width="2.3" height="2.3" fill="#35636c"/><rect x="416.14" y="458.05" width="2.3" height="2.3" fill="#35636c"/><rect x="416.14" y="507.05" width="2.3" height="2.3" fill="#35636c"/><rect x="421.88" y="458.05" width="2.3" height="2.3" fill="#35636c"/><rect x="421.88" y="507.05" width="2.3" height="2.3" fill="#35636c"/><rect x="427.62" y="458.05" width="2.3" height="2.3" fill="#35636c"/><rect x="427.62" y="507.05" width="2.3" height="2.3" fill="#35636c"/><rect x="433.36" y="458.05" width="2.3" height="2.3" fill="#35636c"/><rect x="433.36" y="507.05" width="2.3" height="2.3" fill="#35636c"/><rect x="439.11" y="458.05" width="2.3" height="2.3" fill="#35636c"/><rect x="439.11" y="507.05" width="2.3" height="2.3" fill="#35636c"/><rect x="444.85" y="458.05" width="2.3" height="2.3" fill="#35636c"/><rect x="444.85" y="507.05" width="2.3" height="2.3" fill="#35636c"/><rect x="364.45" y="463.49" width="2.3" height="2.3" fill="#35636c"/><rect x="444.85" y="463.49" width="2.3" height="2.3" fill="#35636c"/><rect x="364.45" y="468.94" width="2.3" height="2.3" fill="#35636c"/><rect x="444.85" y="468.94" width="2.3" height="2.3" fill="#35636c"/><rect x="364.45" y="474.38" width="2.3" height="2.3" fill="#35636c"/><rect x="444.85" y="474.38" width="2.3" height="2.3" fill="#35636c"/><rect x="364.45" y="479.83" width="2.3" height="2.3" fill="#35636c"/><rect x="444.85" y="479.83" width="2.3" height="2.3" fill="#35636c"/><rect x="364.45" y="485.27" width="2.3" height="2.3" fill="#35636c"/><rect x="444.85" y="485.27" width="2.3" height="2.3" fill="#35636c"/><rect x="364.45" y="490.72" width="2.3" height="2.3" fill="#35636c"/><rect x="444.85" y="490.72" width="2.3" height="2.3" fill="#35636c"/><rect x="364.45" y="496.16" width="2.3" height="2.3" fill="#35636c"/><rect x="444.85" y="496.16" width="2.3" height="2.3" fill="#35636c"/><rect x="364.45" y="501.61" width="2.3" height="2.3" fill="#35636c"/><rect x="444.85" y="501.61" width="2.3" height="2.3" fill="#35636c"/><rect x="99.05" y="514.40" width="84.40" height="52.60" rx="10" fill="#d5ecee" /><rect x="103.65" y="519.00" width="75.20" height="43.40" rx="5.4" fill="#fff" /><rect x="187.30" y="514.40" width="84.40" height="52.60" rx="10" fill="#fde7c8" /><rect x="191.90" y="519.00" width="75.20" height="43.40" rx="5.4" fill="#fff" /><rect x="275.50" y="514.40" width="84.40" height="52.60" rx="0" fill="#6d8a6c" /><rect x="278.20" y="517.10" width="79.00" height="47.20" rx="0" fill="#fff" /><rect x="363.60" y="514.40" width="84.40" height="52.60" rx="0" fill="#195458" /><rect x="366.60" y="517.40" width="78.40" height="46.60" rx="0" fill="#fff" /><rect x="366.5" y="460.3" width="78.0" height="46.19999999999999" fill="none" stroke="#7a7a7a" stroke-width="1"/><rect x="363.70" y="457.50" width="5.6" height="5.6" fill="#fff" stroke="#9a9a9a" stroke-width="0.8"/><rect x="363.70" y="503.70" width="5.6" height="5.6" fill="#fff" stroke="#9a9a9a" stroke-width="0.8"/><rect x="441.70" y="457.50" width="5.6" height="5.6" fill="#fff" stroke="#9a9a9a" stroke-width="0.8"/><rect x="441.70" y="503.70" width="5.6" height="5.6" fill="#fff" stroke="#9a9a9a" stroke-width="0.8"/><path d="M390.5 483.5H421.5M406.0 468.0V499.0" stroke="#888" stroke-width="0.8"/><rect x="535.30" y="122.40" width="84.60" height="106.60" rx="0" fill="url(#pA)" /><rect x="624.30" y="122.40" width="84.60" height="106.60" rx="0" fill="url(#pBR)" /><clipPath id="oc4"><rect x="713.70" y="122.40" width="84.60" height="106.60" rx="0"/></clipPath><g clip-path="url(#oc4)"><rect x="713.70" y="122.40" width="84.60" height="106.60" fill="#2f5a66"/><circle cx="721.1" cy="127.7" r="6.0" fill="#d6d0cc"/><rect x="719.6" y="119.9" width="3.0" height="2.1" fill="#c9904f"/><circle cx="724.1" cy="127.7" r="1.1" fill="#ffffff"/><circle cx="722.0" cy="130.6" r="1.1" fill="#ffffff"/><circle cx="718.7" cy="129.5" r="1.1" fill="#ffffff"/><circle cx="718.7" cy="125.9" r="1.1" fill="#ffffff"/><circle cx="722.0" cy="124.8" r="1.1" fill="#ffffff"/><circle cx="743.1" cy="124.5" r="8.0" fill="#86a77a"/><rect x="741.1" y="114.1" width="4.0" height="2.8" fill="#c9904f"/><circle cx="743.1" cy="124.5" r="5.0" fill="none" stroke="#cfe3c4" stroke-width="1.3"/><circle cx="743.1" cy="124.5" r="2.0" fill="#cfe3c4"/><circle cx="785.2" cy="130.8" r="9.0" fill="#8d4536"/><rect x="783.0" y="119.1" width="4.5" height="3.1" fill="#c9904f"/><path d="M777.6 126.8q2.5 -1.8 5.0 0t5.0 0t5.0 0" stroke="#f6e8de" stroke-width="1.1" fill="none"/><path d="M777.6 130.8q2.5 -1.8 5.0 0t5.0 0t5.0 0" stroke="#f6e8de" stroke-width="1.1" fill="none"/><path d="M777.6 134.9q2.5 -1.8 5.0 0t5.0 0t5.0 0" stroke="#f6e8de" stroke-width="1.1" fill="none"/><circle cx="731.6" cy="147.6" r="10.0" fill="#b9824e"/><rect x="729.1" y="134.6" width="5.0" height="3.5" fill="#c9904f"/><rect x="721.6" y="144.1" width="20.0" height="7.0" fill="#f5eadc"/><circle cx="761.0" cy="141.3" r="9.5" fill="#a9d3e0"/><rect x="758.6" y="129.0" width="4.8" height="3.3" fill="#c9904f"/><path d="M752.9 137.0q2.7 -1.9 5.3 0t5.3 0t5.3 0" stroke="#f6e8de" stroke-width="1.1" fill="none"/><path d="M752.9 141.3q2.7 -1.9 5.3 0t5.3 0t5.3 0" stroke="#f6e8de" stroke-width="1.1" fill="none"/><path d="M752.9 145.6q2.7 -1.9 5.3 0t5.3 0t5.3 0" stroke="#f6e8de" stroke-width="1.1" fill="none"/><circle cx="781.0" cy="149.7" r="7.5" fill="#f3c6b1"/><rect x="779.1" y="140.0" width="3.8" height="2.6" fill="#c9904f"/><circle cx="784.8" cy="149.7" r="1.3" fill="#ffffff"/><circle cx="782.2" cy="153.3" r="1.3" fill="#ffffff"/><circle cx="778.0" cy="151.9" r="1.3" fill="#ffffff"/><circle cx="778.0" cy="147.5" r="1.3" fill="#ffffff"/><circle cx="782.1" cy="146.1" r="1.3" fill="#ffffff"/><circle cx="794.7" cy="157.1" r="5.0" fill="#f0c27e"/><rect x="793.5" y="150.6" width="2.5" height="1.8" fill="#c9904f"/><circle cx="717.9" cy="165.4" r="6.0" fill="#a9d3e0"/><rect x="716.4" y="157.6" width="3.0" height="2.1" fill="#c9904f"/><circle cx="735.7" cy="171.8" r="7.0" fill="#f0c27e"/><rect x="734.0" y="162.7" width="3.5" height="2.4" fill="#c9904f"/><path d="M729.8 168.7q2.0 -1.4 3.9 0t3.9 0t3.9 0" stroke="#f6e8de" stroke-width="0.8" fill="none"/><path d="M729.8 171.8q2.0 -1.4 3.9 0t3.9 0t3.9 0" stroke="#f6e8de" stroke-width="0.8" fill="none"/><path d="M729.8 175.0q2.0 -1.4 3.9 0t3.9 0t3.9 0" stroke="#f6e8de" stroke-width="0.8" fill="none"/><circle cx="761.0" cy="168.7" r="11.0" fill="#f0a88a"/><rect x="758.2" y="154.4" width="5.5" height="3.8" fill="#c9904f"/><path d="M751.6 163.8q3.1 -2.2 6.2 0t6.2 0t6.2 0" stroke="#f6e8de" stroke-width="1.3" fill="none"/><path d="M751.6 168.7q3.1 -2.2 6.2 0t6.2 0t6.2 0" stroke="#f6e8de" stroke-width="1.3" fill="none"/><path d="M751.6 173.6q3.1 -2.2 6.2 0t6.2 0t6.2 0" stroke="#f6e8de" stroke-width="1.3" fill="none"/><circle cx="788.4" cy="170.8" r="7.5" fill="#a9c79b"/><rect x="786.5" y="161.1" width="3.8" height="2.6" fill="#c9904f"/><circle cx="792.2" cy="170.8" r="1.3" fill="#ffffff"/><circle cx="789.6" cy="174.4" r="1.3" fill="#ffffff"/><circle cx="785.4" cy="173.0" r="1.3" fill="#ffffff"/><circle cx="785.4" cy="168.6" r="1.3" fill="#ffffff"/><circle cx="789.5" cy="167.2" r="1.3" fill="#ffffff"/><circle cx="723.2" cy="185.4" r="7.0" fill="#8d4536"/><rect x="721.5" y="176.3" width="3.5" height="2.4" fill="#c9904f"/><path d="M717.2 182.2q2.0 -1.4 3.9 0t3.9 0t3.9 0" stroke="#f6e8de" stroke-width="0.8" fill="none"/><path d="M717.2 185.4q2.0 -1.4 3.9 0t3.9 0t3.9 0" stroke="#f6e8de" stroke-width="0.8" fill="none"/><path d="M717.2 188.6q2.0 -1.4 3.9 0t3.9 0t3.9 0" stroke="#f6e8de" stroke-width="0.8" fill="none"/><circle cx="741.0" cy="195.0" r="9.0" fill="#f3c6b1"/><rect x="738.8" y="183.3" width="4.5" height="3.1" fill="#c9904f"/><circle cx="787.3" cy="193.9" r="8.5" fill="#b9824e"/><rect x="785.2" y="182.8" width="4.2" height="3.0" fill="#c9904f"/><rect x="778.8" y="190.9" width="17.0" height="5.9" fill="#f5eadc"/><circle cx="765.2" cy="199.2" r="8.0" fill="#86a77a"/><rect x="763.2" y="188.8" width="4.0" height="2.8" fill="#c9904f"/><circle cx="765.2" cy="199.2" r="5.0" fill="none" stroke="#cfe3c4" stroke-width="1.3"/><circle cx="765.2" cy="199.2" r="2.0" fill="#cfe3c4"/><circle cx="721.1" cy="210.7" r="9.5" fill="#f0a88a"/><rect x="718.7" y="198.3" width="4.8" height="3.3" fill="#c9904f"/><path d="M713.0 206.4q2.7 -1.9 5.3 0t5.3 0t5.3 0" stroke="#f6e8de" stroke-width="1.1" fill="none"/><path d="M713.0 210.7q2.7 -1.9 5.3 0t5.3 0t5.3 0" stroke="#f6e8de" stroke-width="1.1" fill="none"/><path d="M713.0 215.0q2.7 -1.9 5.3 0t5.3 0t5.3 0" stroke="#f6e8de" stroke-width="1.1" fill="none"/><circle cx="743.1" cy="221.2" r="8.0" fill="#86a77a"/><rect x="741.1" y="210.8" width="4.0" height="2.8" fill="#c9904f"/><circle cx="743.1" cy="221.2" r="5.0" fill="none" stroke="#cfe3c4" stroke-width="1.3"/><circle cx="743.1" cy="221.2" r="2.0" fill="#cfe3c4"/><circle cx="765.2" cy="220.2" r="8.0" fill="#d6d0cc"/><rect x="763.2" y="209.8" width="4.0" height="2.8" fill="#c9904f"/><circle cx="769.2" cy="220.2" r="1.4" fill="#ffffff"/><circle cx="766.4" cy="224.0" r="1.4" fill="#ffffff"/><circle cx="762.0" cy="222.6" r="1.4" fill="#ffffff"/><circle cx="762.0" cy="217.9" r="1.4" fill="#ffffff"/><circle cx="766.4" cy="216.4" r="1.4" fill="#ffffff"/><circle cx="784.2" cy="217.0" r="7.0" fill="#f0c27e"/><rect x="782.5" y="207.9" width="3.5" height="2.4" fill="#c9904f"/><path d="M778.2 213.8q2.0 -1.4 3.9 0t3.9 0t3.9 0" stroke="#f6e8de" stroke-width="0.8" fill="none"/><path d="M778.2 217.0q2.0 -1.4 3.9 0t3.9 0t3.9 0" stroke="#f6e8de" stroke-width="0.8" fill="none"/><path d="M778.2 220.2q2.0 -1.4 3.9 0t3.9 0t3.9 0" stroke="#f6e8de" stroke-width="0.8" fill="none"/><circle cx="788.4" cy="227.4" r="5.0" fill="#8d4536"/><rect x="787.2" y="220.9" width="2.5" height="1.8" fill="#c9904f"/></g><rect x="802.60" y="122.40" width="84.60" height="106.60" rx="0" fill="url(#pD)" /><rect x="535.30" y="233.50" width="84.60" height="107.00" rx="0" fill="#6d8a6c" /><rect x="538.30" y="236.50" width="78.60" height="101.00" rx="0" fill="#fff" /><rect x="624.30" y="233.50" width="84.60" height="107.00" rx="0" fill="#1b5458" /><rect x="627.30" y="236.50" width="78.60" height="101.00" rx="0" fill="#fff" /><rect x="713.70" y="233.50" width="84.60" height="107.00" rx="0" fill="#fde6c6" /><rect x="716.70" y="236.50" width="78.60" height="101.00" rx="0" fill="#fff" /><rect x="802.60" y="233.50" width="84.60" height="107.00" rx="0" fill="#d6ecee" /><rect x="805.60" y="236.50" width="78.60" height="101.00" rx="0" fill="#fff" /><rect x="535.30" y="345.40" width="84.60" height="53.60" rx="5" fill="url(#pE)" /><clipPath id="oc5"><rect x="624.30" y="345.40" width="84.60" height="53.60" rx="5"/></clipPath><g clip-path="url(#oc5)"><rect x="624.30" y="345.40" width="84.60" height="53.60" fill="#f8cba4"/><circle cx="630.2" cy="352.9" r="6.5" fill="#7f9f73"/><rect x="628.6" y="344.4" width="3.2" height="2.3" fill="#c9904f"/><circle cx="630.2" cy="352.9" r="4.0" fill="none" stroke="#cfe3c4" stroke-width="1.0"/><circle cx="630.2" cy="352.9" r="1.6" fill="#cfe3c4"/><circle cx="645.1" cy="356.6" r="5.0" fill="#d6d0cc"/><rect x="643.8" y="350.1" width="2.5" height="1.8" fill="#c9904f"/><circle cx="647.6" cy="356.6" r="0.9" fill="#ffffff"/><circle cx="645.9" cy="359.0" r="0.9" fill="#ffffff"/><circle cx="643.1" cy="358.1" r="0.9" fill="#ffffff"/><circle cx="643.1" cy="355.1" r="0.9" fill="#ffffff"/><circle cx="645.9" cy="354.2" r="0.9" fill="#ffffff"/><circle cx="659.0" cy="350.2" r="5.0" fill="#b6d4b0"/><rect x="657.8" y="343.7" width="2.5" height="1.8" fill="#c9904f"/><circle cx="661.5" cy="350.2" r="0.9" fill="#ffffff"/><circle cx="659.8" cy="352.6" r="0.9" fill="#ffffff"/><circle cx="657.0" cy="351.7" r="0.9" fill="#ffffff"/><circle cx="657.0" cy="348.7" r="0.9" fill="#ffffff"/><circle cx="659.8" cy="347.8" r="0.9" fill="#ffffff"/><circle cx="677.7" cy="358.2" r="8.5" fill="#8d4536"/><rect x="675.6" y="347.1" width="4.2" height="3.0" fill="#c9904f"/><path d="M670.5 354.4q2.4 -1.7 4.8 0t4.8 0t4.8 0" stroke="#f6e8de" stroke-width="1.0" fill="none"/><path d="M670.5 358.2q2.4 -1.7 4.8 0t4.8 0t4.8 0" stroke="#f6e8de" stroke-width="1.0" fill="none"/><path d="M670.5 362.0q2.4 -1.7 4.8 0t4.8 0t4.8 0" stroke="#f6e8de" stroke-width="1.0" fill="none"/><circle cx="692.7" cy="349.7" r="5.0" fill="#d6d0cc"/><rect x="691.4" y="343.2" width="2.5" height="1.8" fill="#c9904f"/><circle cx="695.2" cy="349.7" r="0.9" fill="#ffffff"/><circle cx="693.5" cy="352.1" r="0.9" fill="#ffffff"/><circle cx="690.7" cy="351.2" r="0.9" fill="#ffffff"/><circle cx="690.7" cy="348.2" r="0.9" fill="#ffffff"/><circle cx="693.5" cy="347.3" r="0.9" fill="#ffffff"/><circle cx="706.6" cy="353.4" r="6.5" fill="#7f9f73"/><rect x="705.0" y="344.9" width="3.2" height="2.3" fill="#c9904f"/><circle cx="706.6" cy="353.4" r="4.0" fill="none" stroke="#cfe3c4" stroke-width="1.0"/><circle cx="706.6" cy="353.4" r="1.6" fill="#cfe3c4"/><circle cx="659.3" cy="363.4" r="8.0" fill="#f3c6b1"/><rect x="657.3" y="353.0" width="4.0" height="2.8" fill="#c9904f"/><circle cx="637.1" cy="371.0" r="9.0" fill="#b9824e"/><rect x="634.8" y="359.3" width="4.5" height="3.1" fill="#c9904f"/><rect x="628.1" y="367.9" width="18.0" height="6.3" fill="#f5eadc"/><circle cx="695.9" cy="367.8" r="8.0" fill="#a9d3e0"/><rect x="693.9" y="357.4" width="4.0" height="2.8" fill="#c9904f"/><path d="M689.1 364.2q2.2 -1.6 4.5 0t4.5 0t4.5 0" stroke="#f6e8de" stroke-width="1.0" fill="none"/><path d="M689.1 367.8q2.2 -1.6 4.5 0t4.5 0t4.5 0" stroke="#f6e8de" stroke-width="1.0" fill="none"/><path d="M689.1 371.4q2.2 -1.6 4.5 0t4.5 0t4.5 0" stroke="#f6e8de" stroke-width="1.0" fill="none"/><circle cx="680.9" cy="374.2" r="6.0" fill="#f3c6b1"/><rect x="679.4" y="366.4" width="3.0" height="2.1" fill="#c9904f"/><circle cx="656.9" cy="379.1" r="4.0" fill="#8d4536"/><rect x="655.9" y="373.9" width="2.0" height="1.4" fill="#c9904f"/><path d="M653.5 377.3q1.1 -0.8 2.2 0t2.2 0t2.2 0" stroke="#f6e8de" stroke-width="0.6" fill="none"/><path d="M653.5 379.1q1.1 -0.8 2.2 0t2.2 0t2.2 0" stroke="#f6e8de" stroke-width="0.6" fill="none"/><path d="M653.5 380.9q1.1 -0.8 2.2 0t2.2 0t2.2 0" stroke="#f6e8de" stroke-width="0.6" fill="none"/><circle cx="648.9" cy="387.1" r="4.5" fill="#a9d3e0"/><rect x="647.8" y="381.2" width="2.2" height="1.6" fill="#c9904f"/><circle cx="695.9" cy="388.1" r="9.5" fill="#f0a88a"/><rect x="693.5" y="375.7" width="4.8" height="3.3" fill="#c9904f"/><path d="M687.8 383.8q2.7 -1.9 5.3 0t5.3 0t5.3 0" stroke="#f6e8de" stroke-width="1.1" fill="none"/><path d="M687.8 388.1q2.7 -1.9 5.3 0t5.3 0t5.3 0" stroke="#f6e8de" stroke-width="1.1" fill="none"/><path d="M687.8 392.4q2.7 -1.9 5.3 0t5.3 0t5.3 0" stroke="#f6e8de" stroke-width="1.1" fill="none"/><circle cx="676.1" cy="389.7" r="6.0" fill="#b6d4b0"/><rect x="674.6" y="381.9" width="3.0" height="2.1" fill="#c9904f"/><circle cx="679.1" cy="389.7" r="1.1" fill="#ffffff"/><circle cx="677.0" cy="392.6" r="1.1" fill="#ffffff"/><circle cx="673.7" cy="391.5" r="1.1" fill="#ffffff"/><circle cx="673.7" cy="387.9" r="1.1" fill="#ffffff"/><circle cx="677.0" cy="386.8" r="1.1" fill="#ffffff"/><circle cx="659.6" cy="394.4" r="6.0" fill="#d6d0cc"/><rect x="658.1" y="386.6" width="3.0" height="2.1" fill="#c9904f"/><circle cx="662.6" cy="394.4" r="1.1" fill="#ffffff"/><circle cx="660.5" cy="397.3" r="1.1" fill="#ffffff"/><circle cx="657.2" cy="396.2" r="1.1" fill="#ffffff"/><circle cx="657.2" cy="392.6" r="1.1" fill="#ffffff"/><circle cx="660.5" cy="391.5" r="1.1" fill="#ffffff"/><circle cx="633.9" cy="390.3" r="6.0" fill="#f0c27e"/><rect x="632.4" y="382.5" width="3.0" height="2.1" fill="#c9904f"/><path d="M628.8 387.6q1.7 -1.2 3.4 0t3.4 0t3.4 0" stroke="#f6e8de" stroke-width="0.7" fill="none"/><path d="M628.8 390.3q1.7 -1.2 3.4 0t3.4 0t3.4 0" stroke="#f6e8de" stroke-width="0.7" fill="none"/><path d="M628.8 393.0q1.7 -1.2 3.4 0t3.4 0t3.4 0" stroke="#f6e8de" stroke-width="0.7" fill="none"/><circle cx="642.3" cy="397.4" r="5.0" fill="#8d4536"/><rect x="641.0" y="390.9" width="2.5" height="1.8" fill="#c9904f"/></g><rect x="713.70" y="345.40" width="84.60" height="53.60" rx="0" fill="url(#pGR)" /><clipPath id="oc6"><rect x="802.60" y="345.40" width="84.60" height="53.60" rx="0"/></clipPath><g clip-path="url(#oc6)"><rect x="802.60" y="345.40" width="84.60" height="53.60" fill="#fdfbf8"/><circle cx="813.5" cy="355.7" r="10.0" fill="#8d4536"/><rect x="811.0" y="342.7" width="5.0" height="3.5" fill="#c9904f"/><path d="M805.0 351.2q2.8 -2.0 5.6 0t5.6 0t5.6 0" stroke="#f6e8de" stroke-width="1.2" fill="none"/><path d="M805.0 355.7q2.8 -2.0 5.6 0t5.6 0t5.6 0" stroke="#f6e8de" stroke-width="1.2" fill="none"/><path d="M805.0 360.2q2.8 -2.0 5.6 0t5.6 0t5.6 0" stroke="#f6e8de" stroke-width="1.2" fill="none"/><circle cx="836.0" cy="361.4" r="8.0" fill="#f3c6b1"/><rect x="834.0" y="351.0" width="4.0" height="2.8" fill="#c9904f"/><circle cx="856.3" cy="352.4" r="6.0" fill="#d6d0cc"/><rect x="854.8" y="344.6" width="3.0" height="2.1" fill="#c9904f"/><circle cx="859.3" cy="352.4" r="1.1" fill="#ffffff"/><circle cx="857.2" cy="355.3" r="1.1" fill="#ffffff"/><circle cx="853.9" cy="354.2" r="1.1" fill="#ffffff"/><circle cx="853.9" cy="350.6" r="1.1" fill="#ffffff"/><circle cx="857.2" cy="349.5" r="1.1" fill="#ffffff"/><circle cx="877.6" cy="350.1" r="9.0" fill="#7f9f73"/><rect x="875.4" y="338.4" width="4.5" height="3.1" fill="#c9904f"/><circle cx="877.6" cy="350.1" r="5.6" fill="none" stroke="#cfe3c4" stroke-width="1.4"/><circle cx="877.6" cy="350.1" r="2.2" fill="#cfe3c4"/><circle cx="866.6" cy="371.4" r="10.0" fill="#b9824e"/><rect x="864.1" y="358.4" width="5.0" height="3.5" fill="#c9904f"/><rect x="856.6" y="367.9" width="20.0" height="7.0" fill="#f5eadc"/><circle cx="807.0" cy="376.0" r="7.0" fill="#f3c6b1"/><rect x="805.2" y="366.9" width="3.5" height="2.4" fill="#c9904f"/><circle cx="841.6" cy="380.4" r="5.0" fill="#8d4536"/><rect x="840.4" y="373.9" width="2.5" height="1.8" fill="#c9904f"/><path d="M837.4 378.1q1.4 -1.0 2.8 0t2.8 0t2.8 0" stroke="#f6e8de" stroke-width="0.6" fill="none"/><path d="M837.4 380.4q1.4 -1.0 2.8 0t2.8 0t2.8 0" stroke="#f6e8de" stroke-width="0.6" fill="none"/><path d="M837.4 382.6q1.4 -1.0 2.8 0t2.8 0t2.8 0" stroke="#f6e8de" stroke-width="0.6" fill="none"/><circle cx="823.6" cy="381.4" r="4.0" fill="#f0c27e"/><rect x="822.6" y="376.2" width="2.0" height="1.4" fill="#c9904f"/><circle cx="815.6" cy="392.4" r="7.0" fill="#b6d4b0"/><rect x="813.9" y="383.3" width="3.5" height="2.4" fill="#c9904f"/><circle cx="819.1" cy="392.4" r="1.3" fill="#ffffff"/><circle cx="816.7" cy="395.7" r="1.3" fill="#ffffff"/><circle cx="812.8" cy="394.5" r="1.3" fill="#ffffff"/><circle cx="812.8" cy="390.3" r="1.3" fill="#ffffff"/><circle cx="816.7" cy="389.1" r="1.3" fill="#ffffff"/><circle cx="851.6" cy="391.4" r="6.0" fill="#a9d3e0"/><rect x="850.1" y="383.6" width="3.0" height="2.1" fill="#c9904f"/><path d="M846.5 388.7q1.7 -1.2 3.4 0t3.4 0t3.4 0" stroke="#f6e8de" stroke-width="0.7" fill="none"/><path d="M846.5 391.4q1.7 -1.2 3.4 0t3.4 0t3.4 0" stroke="#f6e8de" stroke-width="0.7" fill="none"/><path d="M846.5 394.1q1.7 -1.2 3.4 0t3.4 0t3.4 0" stroke="#f6e8de" stroke-width="0.7" fill="none"/><circle cx="869.6" cy="393.4" r="7.0" fill="#f0c27e"/><rect x="867.9" y="384.3" width="3.5" height="2.4" fill="#c9904f"/><path d="M863.6 390.2q2.0 -1.4 3.9 0t3.9 0t3.9 0" stroke="#f6e8de" stroke-width="0.8" fill="none"/><path d="M863.6 393.4q2.0 -1.4 3.9 0t3.9 0t3.9 0" stroke="#f6e8de" stroke-width="0.8" fill="none"/><path d="M863.6 396.5q2.0 -1.4 3.9 0t3.9 0t3.9 0" stroke="#f6e8de" stroke-width="0.8" fill="none"/><circle cx="884.6" cy="387.4" r="6.0" fill="#f0a88a"/><rect x="883.1" y="379.6" width="3.0" height="2.1" fill="#c9904f"/><path d="M879.5 384.7q1.7 -1.2 3.4 0t3.4 0t3.4 0" stroke="#f6e8de" stroke-width="0.7" fill="none"/><path d="M879.5 387.4q1.7 -1.2 3.4 0t3.4 0t3.4 0" stroke="#f6e8de" stroke-width="0.7" fill="none"/><path d="M879.5 390.1q1.7 -1.2 3.4 0t3.4 0t3.4 0" stroke="#f6e8de" stroke-width="0.7" fill="none"/></g><rect x="535.30" y="403.70" width="84.60" height="53.60" rx="4" fill="#fde7c9" /><rect x="624.30" y="403.70" width="84.60" height="53.60" rx="4" fill="#d6ecee" /><rect x="713.70" y="403.70" width="84.60" height="53.60" rx="0" fill="#195458" /><rect x="802.60" y="403.70" width="84.60" height="53.60" rx="0" fill="#6c8a6a" /><circle cx="576.3" cy="373.4" r="18.6" fill="#9fb474" opacity="0.88"/><path d="M576 374.5V386.5L578.8 383.8L581 388L583 387L580.8 382.8H584.5Z" fill="#fff" stroke="#333" stroke-width="0.8"/></svg><div style="position:absolute;left:369.2px;top:436.7px;width:73.3px;height:13px;border-radius:3px;background:#232323"></div><div style="position:absolute;left:369.2px;top:438.7px;font-size:8.2px;line-height:9.8px;color:#f0f0f0;font-weight:normal;letter-spacing:-0.25px;white-space:nowrap;width:73.3px;text-align:center;">1.38&nbsp; in x 0.82&nbsp; in</div><svg width="944" height="15" style="position:absolute;left:56px;top:61px"><rect width="944" height="15" fill="#f6f6f6"/><path d="M0.5 0V15M7.5 12V15M14.5 12V15M21.5 12V15M28.5 10V15M35.5 12V15M42.5 12V15M49.5 12V15M56.5 0V15M63.5 12V15M70.5 12V15M77.5 12V15M84.5 10V15M92.5 12V15M99.5 12V15M106.5 12V15M113.5 0V15M120.5 12V15M127.5 12V15M134.5 12V15M141.5 10V15M148.5 12V15M155.5 12V15M162.5 12V15M169.5 0V15M176.5 12V15M183.5 12V15M190.5 12V15M197.5 10V15M204.5 12V15M211.5 12V15M218.5 12V15M225.5 0V15M232.5 12V15M239.5 12V15M246.5 12V15M253.5 10V15M260.5 12V15M267.5 12V15M275.5 12V15M282.5 0V15M289.5 12V15M296.5 12V15M303.5 12V15M310.5 10V15M317.5 12V15M324.5 12V15M331.5 12V15M338.5 0V15M345.5 12V15M352.5 12V15M359.5 12V15M366.5 10V15M373.5 12V15M380.5 12V15M387.5 12V15M394.5 0V15M401.5 12V15M408.5 12V15M415.5 12V15M422.5 10V15M429.5 12V15M436.5 12V15M443.5 12V15M450.5 0V15M458.5 12V15M465.5 12V15M472.5 12V15M479.5 10V15M486.5 12V15M493.5 12V15M500.5 12V15M507.5 0V15M514.5 12V15M521.5 12V15M528.5 12V15M535.5 10V15M542.5 12V15M549.5 12V15M556.5 12V15M563.5 0V15M570.5 12V15M577.5 12V15M584.5 12V15M591.5 10V15M598.5 12V15M605.5 12V15M612.5 12V15M619.5 0V15M626.5 12V15M633.5 12V15M641.5 12V15M648.5 10V15M655.5 12V15M662.5 12V15M669.5 12V15M676.5 0V15M683.5 12V15M690.5 12V15M697.5 12V15M704.5 10V15M711.5 12V15M718.5 12V15M725.5 12V15M732.5 0V15M739.5 12V15M746.5 12V15M753.5 12V15M760.5 10V15M767.5 12V15M774.5 12V15M781.5 12V15M788.5 0V15M795.5 12V15M802.5 12V15M809.5 12V15M816.5 10V15M824.5 12V15M831.5 12V15M838.5 12V15M845.5 0V15M852.5 12V15M859.5 12V15M866.5 12V15M873.5 10V15M880.5 12V15M887.5 12V15M894.5 12V15M901.5 0V15M908.5 12V15M915.5 12V15M922.5 12V15M929.5 10V15M936.5 12V15M943.5 12V15" stroke="#c4c4c4" stroke-width="1" fill="none"/><path d="M0 14.5H944" stroke="#cfcfcf" stroke-width="1"/><text x="3.0" y="9" font-family="Liberation Sans" font-size="8" fill="#555">0</text><text x="59.3" y="9" font-family="Liberation Sans" font-size="8" fill="#555">1</text><text x="115.6" y="9" font-family="Liberation Sans" font-size="8" fill="#555">2</text><text x="171.9" y="9" font-family="Liberation Sans" font-size="8" fill="#555">3</text><text x="228.2" y="9" font-family="Liberation Sans" font-size="8" fill="#555">4</text><text x="284.6" y="9" font-family="Liberation Sans" font-size="8" fill="#555">5</text><text x="340.9" y="9" font-family="Liberation Sans" font-size="8" fill="#555">6</text><text x="397.2" y="9" font-family="Liberation Sans" font-size="8" fill="#555">7</text><text x="453.5" y="9" font-family="Liberation Sans" font-size="8" fill="#555">8</text><text x="509.8" y="9" font-family="Liberation Sans" font-size="8" fill="#555">9</text><text x="566.1" y="9" font-family="Liberation Sans" font-size="8" fill="#555">10</text><text x="622.4" y="9" font-family="Liberation Sans" font-size="8" fill="#555">11</text><text x="678.7" y="9" font-family="Liberation Sans" font-size="8" fill="#555">12</text><text x="735.0" y="9" font-family="Liberation Sans" font-size="8" fill="#555">13</text><text x="791.3" y="9" font-family="Liberation Sans" font-size="8" fill="#555">14</text><text x="847.7" y="9" font-family="Liberation Sans" font-size="8" fill="#555">15</text><text x="904.0" y="9" font-family="Liberation Sans" font-size="8" fill="#555">16</text></svg><svg width="15" height="547" style="position:absolute;left:42px;top:61px"><rect width="15" height="547" fill="#f8f8f8"/><path d="M0 15.5H15M11 22.5H15M11 29.5H15M11 36.5H15M9 43.5H15M11 50.5H15M11 57.5H15M11 64.5H15M0 71.5H15M11 78.5H15M11 85.5H15M11 93.5H15M9 100.5H15M11 107.5H15M11 114.5H15M11 121.5H15M0 128.5H15M11 135.5H15M11 142.5H15M11 149.5H15M9 156.5H15M11 163.5H15M11 170.5H15M11 177.5H15M0 184.5H15M11 191.5H15M11 198.5H15M11 205.5H15M9 212.5H15M11 219.5H15M11 226.5H15M11 233.5H15M0 240.5H15M11 247.5H15M11 254.5H15M11 261.5H15M9 268.5H15M11 276.5H15M11 283.5H15M11 290.5H15M0 297.5H15M11 304.5H15M11 311.5H15M11 318.5H15M9 325.5H15M11 332.5H15M11 339.5H15M11 346.5H15M0 353.5H15M11 360.5H15M11 367.5H15M11 374.5H15M9 381.5H15M11 388.5H15M11 395.5H15M11 402.5H15M0 409.5H15M11 416.5H15M11 423.5H15M11 430.5H15M9 437.5H15M11 444.5H15M11 452.5H15M11 459.5H15M0 466.5H15M11 473.5H15M11 480.5H15M11 487.5H15M9 494.5H15M11 501.5H15M11 508.5H15M11 515.5H15M0 522.5H15M11 529.5H15M11 536.5H15M11 543.5H15" stroke="#c4c4c4" stroke-width="1" fill="none"/><path d="M14.5 0V547" stroke="#cfcfcf" stroke-width="1"/><text x="0" y="0" transform="translate(2 17.6) rotate(90)" font-family="Liberation Sans" font-size="8" fill="#555">0</text><text x="0" y="0" transform="translate(2 73.9) rotate(90)" font-family="Liberation Sans" font-size="8" fill="#555">1</text><text x="0" y="0" transform="translate(2 130.2) rotate(90)" font-family="Liberation Sans" font-size="8" fill="#555">2</text><text x="0" y="0" transform="translate(2 186.5) rotate(90)" font-family="Liberation Sans" font-size="8" fill="#555">3</text><text x="0" y="0" transform="translate(2 242.8) rotate(90)" font-family="Liberation Sans" font-size="8" fill="#555">4</text><text x="0" y="0" transform="translate(2 299.1) rotate(90)" font-family="Liberation Sans" font-size="8" fill="#555">5</text><text x="0" y="0" transform="translate(2 355.5) rotate(90)" font-family="Liberation Sans" font-size="8" fill="#555">6</text><text x="0" y="0" transform="translate(2 411.8) rotate(90)" font-family="Liberation Sans" font-size="8" fill="#555">7</text><text x="0" y="0" transform="translate(2 468.1) rotate(90)" font-family="Liberation Sans" font-size="8" fill="#555">8</text><text x="0" y="0" transform="translate(2 524.4) rotate(90)" font-family="Liberation Sans" font-size="8" fill="#555">9</text></svg><div style="position:absolute;left:42px;top:61px;width:15px;height:15px;background:#f6f6f6;border-right:1px solid #cfcfcf;border-bottom:1px solid #cfcfcf;box-sizing:border-box"></div><div style="position:absolute;left:999px;top:61px;width:11px;height:547px;background:#f0f0f0"></div><div style="position:absolute;left:1001px;top:72.5px;width:7px;height:19.5px;background:#c1c1c1"></div><svg style="position:absolute;left:1002px;top:66px" width="5" height="3"><path d="M0 3H5L2.5 0Z" fill="#777"/></svg><svg style="position:absolute;left:1001.5px;top:600px" width="6" height="4"><path d="M0 0H6L3 4Z" fill="#333"/></svg><div style="position:absolute;left:42px;top:608px;width:969px;height:10px;background:#f0f0f0"></div><div style="position:absolute;left:52.5px;top:609.3px;width:63px;height:7.5px;background:#c1c1c1"></div><svg style="position:absolute;left:45px;top:610px" width="4" height="6"><path d="M4 0V6L0 3Z" fill="#444"/></svg><svg style="position:absolute;left:992.5px;top:610px" width="4" height="6"><path d="M0 0V6L4 3Z" fill="#333"/></svg><div style="position:absolute;left:999px;top:608px;width:12px;height:10px;background:#dcdcdc"></div><div style="position:absolute;left:72px;top:583px;width:62px;height:18px;border-radius:3px;background:rgba(235,235,235,0.55)"></div><svg style="position:absolute;left:66px;top:584px" width="70" height="16"><circle cx="8" cy="8" r="5.5" fill="none" stroke="#bbb" stroke-width="1"/><path d="M5.5 8H10.5" stroke="#bbb"/><circle cx="58" cy="8" r="5.5" fill="none" stroke="#bbb" stroke-width="1"/><path d="M55.5 8H60.5M58 5.5V10.5" stroke="#bbb"/></svg><div style="position:absolute;left:83.5px;top:586.8px;font-size:12px;line-height:14.4px;color:#bdbdbd;font-weight:normal;letter-spacing:-0.3px;white-space:nowrap;">125%</div><div style="position:absolute;left:42px;top:30px;width:970px;height:32px;background:#fff;border-bottom:1.5px solid #d2d2d2;box-sizing:border-box"></div><svg style="position:absolute;left:52px;top:42px" width="14" height="11"><path d="M4 1 L1.2 3.8 L4 6.6M1.5 3.8H8.5Q12.5 3.8 12.5 7 Q12.5 10 8.5 10H5" fill="none" stroke="#333" stroke-width="1.2"/></svg><svg style="position:absolute;left:76px;top:42px" width="14" height="11"><path d="M10 1 L12.8 3.8 L10 6.6M12.5 3.8H5.5Q1.5 3.8 1.5 7 Q1.5 10 5.5 10H9" fill="none" stroke="#c8c8c8" stroke-width="1.2"/></svg><div style="position:absolute;left:99px;top:37px;width:1px;height:19px;background:#e3e3e3"></div><div style="position:absolute;left:187px;top:37px;width:1px;height:19px;background:#e3e3e3"></div><div style="position:absolute;left:259px;top:37px;width:1px;height:19px;background:#e3e3e3"></div><div style="position:absolute;left:354.5px;top:37px;width:1px;height:19px;background:#e3e3e3"></div><div style="position:absolute;left:391px;top:37px;width:1px;height:19px;background:#e3e3e3"></div><div style="position:absolute;left:429.5px;top:37px;width:1px;height:19px;background:#e3e3e3"></div><div style="position:absolute;left:545.5px;top:37px;width:1px;height:19px;background:#e3e3e3"></div><div style="position:absolute;left:616px;top:37px;width:1px;height:19px;background:#e3e3e3"></div><div style="position:absolute;left:109px;top:34.9px;font-size:7px;line-height:8.4px;color:#4a4a4a;font-weight:normal;letter-spacing:-0.2px;white-space:nowrap;">Operation</div><div style="position:absolute;left:109px;top:45px;width:54px;height:11px;border:1px solid #dadada;box-sizing:border-box;border-radius:1px"></div><div style="position:absolute;left:112px;top:46.8px;font-size:6.3px;line-height:7.6px;color:#333;font-weight:normal;letter-spacing:-0.15px;white-space:nowrap;">Print Then Cut</div><svg style="position:absolute;left:155px;top:48.5px" width="5" height="4"><path d="M0 0H5L2.5 3.5Z" fill="#222"/></svg><div style="position:absolute;left:167px;top:45px;width:11px;height:11px;border:1px solid #e6e6e6;box-sizing:border-box;border-radius:2px"></div><div style="position:absolute;left:196.5px;top:34.9px;font-size:7px;line-height:8.4px;color:#4a4a4a;font-weight:normal;letter-spacing:-0.2px;white-space:nowrap;">Select All</div><svg style="position:absolute;left:203px;top:44px" width="14" height="13"><path d="M7 1.5 Q9 0 11 1.5 Q13 3 12.5 6 Q11.5 9 7 12 Q2.5 9 1.5 6 Q1 3 3 1.5 Q5 0 7 1.5Z" fill="none" stroke="#333" stroke-width="1.1" stroke-dasharray="1.3 1.2"/><path d="M5.5 5V9.5L6.7 8.3L7.8 10.5L8.6 10L7.6 8H9.3Z" fill="#333"/></svg><div style="position:absolute;left:235.5px;top:34.9px;font-size:7px;line-height:8.4px;color:#4a4a4a;font-weight:normal;letter-spacing:-0.2px;white-space:nowrap;">Edit</div><svg style="position:absolute;left:233px;top:44px" width="13" height="13"><path d="M2 11.5 L2.5 8.5 L9 2 L11 4 L4.5 10.5Z M8 3 L10 5" fill="none" stroke="#333" stroke-width="1.2"/></svg><svg style="position:absolute;left:247px;top:50px" width="4" height="3"><path d="M0 0H4L2 3Z" fill="#222"/></svg><div style="position:absolute;left:270px;top:34.9px;font-size:7px;line-height:8.4px;color:#c9c9c9;font-weight:normal;letter-spacing:-0.2px;white-space:nowrap;">Align</div><svg style="position:absolute;left:270px;top:46px" width="17" height="10"><path d="M1 0V10M3 2.5H11V7.5H3Z" fill="none" stroke="#c8c8c8" stroke-width="1.2"/><path d="M13.5 4H17L15.2 6Z" fill="#c8c8c8"/></svg><div style="position:absolute;left:295.5px;top:34.9px;font-size:7px;line-height:8.4px;color:#4a4a4a;font-weight:normal;letter-spacing:-0.2px;white-space:nowrap;">Arrange</div><svg style="position:absolute;left:296px;top:45px" width="12" height="12"><path d="M1 1H7V7H1Z" fill="none" stroke="#333" stroke-width="1.2"/><path d="M4.5 4.5 L8 4.5 L11 8 L7.5 11.5 L4.5 8Z" fill="#fff" stroke="#333" stroke-width="1.2"/></svg><svg style="position:absolute;left:310px;top:50px" width="4" height="3"><path d="M0 0H4L2 3Z" fill="#222"/></svg><div style="position:absolute;left:331px;top:34.9px;font-size:7px;line-height:8.4px;color:#4a4a4a;font-weight:normal;letter-spacing:-0.2px;white-space:nowrap;">Flip</div><svg style="position:absolute;left:328px;top:44.5px" width="12" height="12"><path d="M5.2 1 L1 11 H5.2Z M6.8 1 L11 11 H6.8Z" fill="none" stroke="#333" stroke-width="1.2"/></svg><svg style="position:absolute;left:342px;top:50px" width="4" height="3"><path d="M0 0H4L2 3Z" fill="#222"/></svg><div style="position:absolute;left:364px;top:34.9px;font-size:7px;line-height:8.4px;color:#4a4a4a;font-weight:normal;letter-spacing:-0.2px;white-space:nowrap;">Offset</div><svg style="position:absolute;left:364px;top:44px" width="13" height="13"><path d="M6.5 3 L10 6.5 L6.5 10 L3 6.5Z" fill="none" stroke="#333" stroke-width="1.2"/><circle cx="6.5" cy="6.5" r="5.3" fill="none" stroke="#333" stroke-width="1" stroke-dasharray="1.4 1.2"/></svg><svg style="position:absolute;left:378.5px;top:50px" width="4" height="3"><path d="M0 0H4L2 3Z" fill="#222"/></svg><div style="position:absolute;left:402.5px;top:34.9px;font-size:7px;line-height:8.4px;color:#c9c9c9;font-weight:normal;letter-spacing:-0.2px;white-space:nowrap;">Warp</div><svg style="position:absolute;left:401px;top:46px" width="20" height="10"><path d="M1 1Q6 2.5 11 1V9Q6 7.5 1 9Z M4 1.5V8.5M8 1.5V8.5" fill="none" stroke="#c8c8c8" stroke-width="1.2"/><path d="M15 4H19L17 6Z" fill="#c8c8c8"/></svg><div style="position:absolute;left:439px;top:34.9px;font-size:7px;line-height:8.4px;color:#4a4a4a;font-weight:normal;letter-spacing:-0.2px;white-space:nowrap;">Size</div><div style="position:absolute;left:439px;top:47.6px;font-size:6.5px;line-height:7.8px;color:#777;font-weight:normal;letter-spacing:0px;white-space:nowrap;">W</div><div style="position:absolute;left:448px;top:45px;width:35.5px;height:11px;border:1px solid #dedede;box-sizing:border-box;border-radius:2px"></div><div style="position:absolute;left:452px;top:47.6px;font-size:7px;line-height:8.4px;color:#555;font-weight:normal;letter-spacing:-0.1px;white-space:nowrap;">1.38</div><svg style="position:absolute;left:476.5px;top:46.5px" width="5" height="8"><path d="M0 3.2H5L2.5 0Z M0 4.8H5L2.5 8Z" fill="#222"/></svg><div style="position:absolute;left:493.5px;top:47.6px;font-size:6.5px;line-height:7.8px;color:#777;font-weight:normal;letter-spacing:0px;white-space:nowrap;">H</div><div style="position:absolute;left:501px;top:45px;width:35px;height:11px;border:1px solid #dedede;box-sizing:border-box;border-radius:2px"></div><div style="position:absolute;left:505px;top:47.6px;font-size:7px;line-height:8.4px;color:#555;font-weight:normal;letter-spacing:-0.1px;white-space:nowrap;">0.82</div><svg style="position:absolute;left:529px;top:46.5px" width="5" height="8"><path d="M0 3.2H5L2.5 0Z M0 4.8H5L2.5 8Z" fill="#222"/></svg><svg style="position:absolute;left:484px;top:36px" width="21" height="10"><path d="M1 9V6.5H4.5M16.5 6.5H20V9" fill="none" stroke="#aaa" stroke-width="0.8"/><path d="M8.2 4.5V3Q8.2 1 10.5 1Q12.8 1 12.8 3V4.5" fill="none" stroke="#333" stroke-width="1"/><rect x="7.3" y="4.5" width="6.4" height="5" rx="1" fill="none" stroke="#333" stroke-width="1"/></svg><div style="position:absolute;left:555.5px;top:34.9px;font-size:7px;line-height:8.4px;color:#4a4a4a;font-weight:normal;letter-spacing:-0.2px;white-space:nowrap;">Rotate</div><svg style="position:absolute;left:555px;top:44px" width="13" height="13"><path d="M2.2 5.5 Q3.5 2 6.5 2 Q9.5 2 10.8 4.5M10.8 7.5 Q9.5 11 6.5 11 Q3.5 11 2.2 8.5" fill="none" stroke="#333" stroke-width="1.2"/><path d="M11.5 1.5V5H8Z M1.5 11.5V8H5Z" fill="#333"/></svg><div style="position:absolute;left:571px;top:45px;width:35px;height:11px;border:1px solid #dedede;box-sizing:border-box;border-radius:2px"></div><div style="position:absolute;left:575px;top:47.6px;font-size:7px;line-height:8.4px;color:#555;font-weight:normal;letter-spacing:-0.1px;white-space:nowrap;">0</div><svg style="position:absolute;left:599px;top:46.5px" width="5" height="8"><path d="M0 3.2H5L2.5 0Z M0 4.8H5L2.5 8Z" fill="#222"/></svg><div style="position:absolute;left:625.5px;top:34.9px;font-size:7px;line-height:8.4px;color:#4a4a4a;font-weight:normal;letter-spacing:-0.2px;white-space:nowrap;">Position</div><div style="position:absolute;left:626px;top:47.6px;font-size:6.5px;line-height:7.8px;color:#777;font-weight:normal;letter-spacing:0px;white-space:nowrap;">X</div><div style="position:absolute;left:633px;top:45px;width:35px;height:11px;border:1px solid #dedede;box-sizing:border-box;border-radius:2px"></div><div style="position:absolute;left:637px;top:47.6px;font-size:7px;line-height:8.4px;color:#555;font-weight:normal;letter-spacing:-0.1px;white-space:nowrap;">5.518</div><svg style="position:absolute;left:661px;top:46.5px" width="5" height="8"><path d="M0 3.2H5L2.5 0Z M0 4.8H5L2.5 8Z" fill="#222"/></svg><div style="position:absolute;left:675.5px;top:47.6px;font-size:6.5px;line-height:7.8px;color:#777;font-weight:normal;letter-spacing:0px;white-space:nowrap;">Y</div><div style="position:absolute;left:682px;top:45px;width:35px;height:11px;border:1px solid #dedede;box-sizing:border-box;border-radius:2px"></div><div style="position:absolute;left:686px;top:47.6px;font-size:7px;line-height:8.4px;color:#555;font-weight:normal;letter-spacing:-0.1px;white-space:nowrap;">6.816</div><svg style="position:absolute;left:710px;top:46.5px" width="5" height="8"><path d="M0 3.2H5L2.5 0Z M0 4.8H5L2.5 8Z" fill="#222"/></svg><div style="position:absolute;left:0;top:0;width:1200px;height:30px;background:#3d4246"></div><div style="position:absolute;left:12px;top:10px;width:15px;height:1.4px;background:#eeeeee"></div><div style="position:absolute;left:12px;top:14px;width:15px;height:1.4px;background:#eeeeee"></div><div style="position:absolute;left:12px;top:18px;width:15px;height:1.4px;background:#eeeeee"></div><div style="position:absolute;left:42px;top:9.0px;font-size:11px;line-height:13.2px;color:#f2f2f2;font-weight:normal;letter-spacing:-0.45px;white-space:nowrap;">Canvas</div><div style="position:absolute;left:374.5px;top:9.0px;font-size:11px;line-height:13.2px;color:#f2f2f2;font-weight:normal;letter-spacing:-0.28px;white-space:nowrap;">Mim-Jenkinson-Craft-with-Sarah-Christmas-Stickers*</div><svg style="position:absolute;left:920px;top:10px" width="16" height="14" viewBox="0 0 16 14"><path d="M3 11 Q4.5 9.5 4.5 7 V5.5 Q4.5 2.5 8 2.5 Q11.5 2.5 11.5 5.5 V7 Q11.5 9.5 13 11 Z" fill="none" stroke="#eee" stroke-width="1.2"/><path d="M6.5 12.2 Q8 13.8 9.5 12.2" fill="none" stroke="#eee" stroke-width="1.1"/></svg><div style="position:absolute;left:922px;top:1px;width:12px;height:12px;border-radius:6px;background:#e2531c"></div><div style="position:absolute;left:922.5px;top:2.8px;font-size:7px;line-height:8.4px;color:#fff;font-weight:bold;letter-spacing:-0.3px;white-space:nowrap;width:11px;text-align:center;">14</div><div style="position:absolute;left:942.5px;top:9.0px;font-size:11px;line-height:13.2px;color:#f2f2f2;font-weight:normal;letter-spacing:-0.35px;white-space:nowrap;">My Stuff</div><div style="position:absolute;left:988px;top:9.0px;font-size:11px;line-height:13.2px;color:#f2f2f2;font-weight:normal;letter-spacing:-0.3px;white-space:nowrap;">Save</div><div style="position:absolute;left:1026.5px;top:10px;width:1.2px;height:10px;background:#bbb"></div><div style="position:absolute;left:1043.5px;top:9.0px;font-size:11px;line-height:13.2px;color:#f2f2f2;font-weight:normal;letter-spacing:-0.3px;white-space:nowrap;">Maker</div><svg style="position:absolute;left:1077px;top:11px" width="11" height="8"><path d="M1 1.5 L5.5 6 L10 1.5" fill="none" stroke="#eee" stroke-width="1.3"/></svg><div style="position:absolute;left:1109.5px;top:4.5px;width:82.5px;height:20px;border-radius:10px;background:#107a5b"></div><div style="position:absolute;left:1109.5px;top:9.9px;font-size:8px;line-height:9.6px;color:#fff;font-weight:bold;letter-spacing:-0.2px;white-space:nowrap;width:82.5px;text-align:center;">Make It</div><div style="position:absolute;left:0;top:30px;width:42px;height:588px;background:#cbcbcb;border-right:1px solid #bdbdbd;box-sizing:border-box"></div><div style="position:absolute;left:0px;top:56.0px;font-size:6.6px;line-height:7.9px;color:#5a5a5a;font-weight:normal;letter-spacing:0px;white-space:nowrap;width:40px;text-align:center;">New</div><div style="position:absolute;left:0px;top:100.0px;font-size:6.6px;line-height:7.9px;color:#5a5a5a;font-weight:normal;letter-spacing:0px;white-space:nowrap;width:40px;text-align:center;">Templates</div><div style="position:absolute;left:0px;top:144.0px;font-size:6.6px;line-height:7.9px;color:#5a5a5a;font-weight:normal;letter-spacing:0px;white-space:nowrap;width:40px;text-align:center;">Projects</div><div style="position:absolute;left:0px;top:187.5px;font-size:6.6px;line-height:7.9px;color:#5a5a5a;font-weight:normal;letter-spacing:0px;white-space:nowrap;width:40px;text-align:center;">Shapes</div><div style="position:absolute;left:0px;top:231.0px;font-size:6.6px;line-height:7.9px;color:#5a5a5a;font-weight:normal;letter-spacing:0px;white-space:nowrap;width:40px;text-align:center;">Images</div><div style="position:absolute;left:0px;top:275.0px;font-size:6.6px;line-height:7.9px;color:#5a5a5a;font-weight:normal;letter-spacing:0px;white-space:nowrap;width:40px;text-align:center;">Text</div><div style="position:absolute;left:0px;top:319.0px;font-size:6.6px;line-height:7.9px;color:#5a5a5a;font-weight:normal;letter-spacing:0px;white-space:nowrap;width:40px;text-align:center;">Phrases</div><div style="position:absolute;left:0px;top:406.5px;font-size:6.6px;line-height:7.9px;color:#5a5a5a;font-weight:normal;letter-spacing:0px;white-space:nowrap;width:40px;text-align:center;">Upload</div><div style="position:absolute;left:0px;top:450.5px;font-size:6.6px;line-height:7.9px;color:#5a5a5a;font-weight:normal;letter-spacing:0px;white-space:nowrap;width:40px;text-align:center;">Monogram</div><div style="position:absolute;left:0px;top:361.0px;font-size:6.6px;line-height:7.9px;color:#5a5a5a;font-weight:normal;letter-spacing:0px;white-space:nowrap;width:40px;text-align:center;">Editable</div><div style="position:absolute;left:0px;top:370.0px;font-size:6.6px;line-height:7.9px;color:#5a5a5a;font-weight:normal;letter-spacing:0px;white-space:nowrap;width:40px;text-align:center;">Images</div><svg style="position:absolute;left:11px;top:35px" width="18" height="18" viewBox="0 0 16 16"><circle cx="8" cy="8" r="6" fill="none" stroke="#3a3a3a" stroke-width="1.15"/><path d="M8 4.5V11.5M4.5 8H11.5" fill="none" stroke="#3a3a3a" stroke-width="1.15"/></svg><svg style="position:absolute;left:11px;top:79px" width="18" height="18" viewBox="0 0 16 16"><path d="M4.5 3 L2 5 L3.5 7.5 L5 7 V13.5 H11 V7 L12.5 7.5 L14 5 L11.5 3 Q8 5 4.5 3Z" fill="none" stroke="#3a3a3a" stroke-width="1.15"/><path d="M6.5 7.5H9.5M6.5 10H9.5" fill="none" stroke="#3a3a3a" stroke-width="1.15"/></svg><svg style="position:absolute;left:11px;top:123px" width="18" height="18" viewBox="0 0 16 16"><path d="M5 3H10.5L12 4.5V13H5Z" fill="none" stroke="#3a3a3a" stroke-width="1.15"/><circle cx="8.4" cy="7.6" r="1.4" fill="none" stroke="#3a3a3a" stroke-width="1.15"/><path d="M6.5 11H10.5" fill="none" stroke="#3a3a3a" stroke-width="1.15"/></svg><svg style="position:absolute;left:11px;top:167px" width="18" height="18" viewBox="0 0 16 16"><path d="M7 2.5 L2.5 9.5 H11.5Z" fill="none" stroke="#3a3a3a" stroke-width="1.15"/><circle cx="10.3" cy="10" r="3" fill="none" stroke="#3a3a3a" stroke-width="1.15"/></svg><svg style="position:absolute;left:11px;top:211px" width="18" height="18" viewBox="0 0 16 16"><path d="M8 2 Q12 2 12 6.5 Q12 9 8.8 11.8 H7.2 Q4 9 4 6.5 Q4 2 8 2Z" fill="none" stroke="#3a3a3a" stroke-width="1.15"/><path d="M8 2.2V11.8" fill="none" stroke="#3a3a3a" stroke-width="1.15"/><path d="M7 12.5H9V14H7Z" fill="none" stroke="#3a3a3a" stroke-width="1.15"/></svg><svg style="position:absolute;left:11px;top:255px" width="18" height="18" viewBox="0 0 16 16"><path d="M3.5 4.5V3H12.5V4.5M8 3V13M6 13H10" fill="none" stroke="#3a3a3a" stroke-width="1.15"/></svg><svg style="position:absolute;left:11px;top:299px" width="18" height="18" viewBox="0 0 16 16"><path d="M8 2.5 Q13.5 2.5 13.5 7 Q13.5 11 8 11 Q6.5 11 5.5 10.6 L3 12.5 L3.6 9.6 Q2.5 8.5 2.5 7 Q2.5 2.5 8 2.5Z" fill="none" stroke="#3a3a3a" stroke-width="1.15"/><path d="M5.5 6H10.5M5.5 8H9.5" fill="none" stroke="#3a3a3a" stroke-width="1.15"/></svg><svg style="position:absolute;left:11px;top:340px" width="18" height="18" viewBox="0 0 16 16"><path d="M3.5 4H12V12.5H3.5Z" fill="none" stroke="#3a3a3a" stroke-width="1.15"/><path d="M5 10 L7 6.5 L9 8.5 L10.5 6.5" fill="none" stroke="#3a3a3a" stroke-width="1.15"/><circle cx="3.5" cy="4" r="1.2" fill="#3a3a3a"/><circle cx="12" cy="12.5" r="1.2" fill="#3a3a3a"/></svg><svg style="position:absolute;left:11px;top:386px" width="18" height="18" viewBox="0 0 16 16"><path d="M3 3.5H13M8 6V13M5 8.5L8 5.5L11 8.5" fill="none" stroke="#3a3a3a" stroke-width="1.15"/></svg><svg style="position:absolute;left:11px;top:432px" width="18" height="18" viewBox="0 0 16 16"><path d="M2.5 12V4 L5.5 9 L8.5 4V12M8.5 4H13M13 4 Q10 4 10 8 Q10 12 13 12V8.5H11" fill="none" stroke="#3a3a3a" stroke-width="1.15"/></svg><div style="position:absolute;left:1011px;top:30px;width:189px;height:588px;background:#fff;border-left:1px solid #dcdcdc;box-sizing:border-box"></div><div style="position:absolute;left:1022.5px;top:40.0px;font-size:9.2px;line-height:11.0px;color:#1a6e58;font-weight:normal;letter-spacing:-0.1px;white-space:nowrap;">Layers</div><div style="position:absolute;left:1069px;top:40.0px;font-size:9.2px;line-height:11.0px;color:#555;font-weight:normal;letter-spacing:-0.1px;white-space:nowrap;">Color Sync</div><div style="position:absolute;left:1012px;top:60px;width:188px;height:1px;background:#e8e8e8"></div><div style="position:absolute;left:1012px;top:58.3px;width:47px;height:2px;background:#157a5c"></div><svg style="position:absolute;left:1023px;top:68px" width="14" height="14"><path d="M1 4V1H4M10 1H13V4M13 10V13H10M4 13H1V10" fill="none" stroke="#ccc" stroke-width="1"/><rect x="4" y="4" width="4" height="4" fill="none" stroke="#ccc"/><rect x="6" y="6" width="4" height="4" fill="none" stroke="#ccc"/></svg><svg style="position:absolute;left:1048px;top:68px" width="14" height="14"><path d="M3 10H1.5V1.5H10V3" fill="none" stroke="#333" stroke-width="1.2"/><rect x="3.5" y="3.5" width="9" height="9" fill="none" stroke="#333" stroke-width="1.2"/><path d="M8 5.5V10.5M5.5 8H10.5" stroke="#333" stroke-width="1.2"/></svg><svg style="position:absolute;left:1073px;top:68px" width="14" height="14"><path d="M1.5 3H12.5M5 3V1.5H9V3M3 3L3.8 12.5H10.2L11 3M5.7 5.5V10.5M8.3 5.5V10.5" fill="none" stroke="#333" stroke-width="1.2"/></svg><div style="position:absolute;left:1012px;top:89.5px;width:188px;height:1px;background:#e8e8e8"></div><div style="position:absolute;left:1189px;top:90px;width:11px;height:435px;background:#f1f1f1"></div><div style="position:absolute;left:1191px;top:276px;width:7px;height:94px;background:#c1c1c1"></div><svg style="position:absolute;left:1191.5px;top:95px" width="6" height="4"><path d="M0 4H6L3 0Z" fill="#444"/></svg><svg style="position:absolute;left:1191.5px;top:517px" width="6" height="4"><path d="M0 0H6L3 4Z" fill="#444"/></svg><div style="position:absolute;left:1055px;top:96.9px;font-size:9px;line-height:10.8px;color:#3c3c3c;font-weight:normal;letter-spacing:0px;white-space:nowrap;">Mim-jenkinson-weekly-s...</div><div style="position:absolute;left:1055px;top:108.7px;font-size:9px;line-height:10.8px;color:#8a8a8a;font-weight:normal;letter-spacing:0px;white-space:nowrap;">Print Then Cut</div><div style="position:absolute;left:1035px;top:140.7px;width:13.5px;height:7px;background:#d4ebe8"></div><div style="position:absolute;left:1055px;top:133.3px;font-size:9px;line-height:10.8px;color:#3c3c3c;font-weight:normal;letter-spacing:0px;white-space:nowrap;">Mim-jenkinson-weekly-s...</div><div style="position:absolute;left:1055px;top:145.1px;font-size:9px;line-height:10.8px;color:#8a8a8a;font-weight:normal;letter-spacing:0px;white-space:nowrap;">Print Then Cut</div><div style="position:absolute;left:1035px;top:177.1px;width:13.5px;height:7px;background:#fbe3c2"></div><div style="position:absolute;left:1055px;top:169.7px;font-size:9px;line-height:10.8px;color:#3c3c3c;font-weight:normal;letter-spacing:0px;white-space:nowrap;">Mim-jenkinson-weekly-s...</div><div style="position:absolute;left:1055px;top:181.5px;font-size:9px;line-height:10.8px;color:#8a8a8a;font-weight:normal;letter-spacing:0px;white-space:nowrap;">Print Then Cut</div><div style="position:absolute;left:1055px;top:206.1px;font-size:9px;line-height:10.8px;color:#3c3c3c;font-weight:normal;letter-spacing:0px;white-space:nowrap;">Mim-jenkinson-weekly-s...</div><div style="position:absolute;left:1055px;top:217.9px;font-size:9px;line-height:10.8px;color:#8a8a8a;font-weight:normal;letter-spacing:0px;white-space:nowrap;">Print Then Cut</div><div style="position:absolute;left:1055px;top:242.5px;font-size:9px;line-height:10.8px;color:#3c3c3c;font-weight:normal;letter-spacing:0px;white-space:nowrap;">Mim-jenkinson-weekly-s...</div><div style="position:absolute;left:1055px;top:254.3px;font-size:9px;line-height:10.8px;color:#8a8a8a;font-weight:normal;letter-spacing:0px;white-space:nowrap;">Print Then Cut</div><div style="position:absolute;left:1035px;top:286.3px;width:13.5px;height:7px;background:#6e8a6b"></div><div style="position:absolute;left:1055px;top:278.9px;font-size:9px;line-height:10.8px;color:#3c3c3c;font-weight:normal;letter-spacing:0px;white-space:nowrap;">Mim-jenkinson-weekly-s...</div><div style="position:absolute;left:1055px;top:290.7px;font-size:9px;line-height:10.8px;color:#8a8a8a;font-weight:normal;letter-spacing:0px;white-space:nowrap;">Print Then Cut</div><div style="position:absolute;left:1035px;top:322.7px;width:13.5px;height:7px;background:#1c5258"></div><div style="position:absolute;left:1055px;top:315.3px;font-size:9px;line-height:10.8px;color:#3c3c3c;font-weight:normal;letter-spacing:0px;white-space:nowrap;">Mim-jenkinson-weekly-s...</div><div style="position:absolute;left:1055px;top:327.1px;font-size:9px;line-height:10.8px;color:#8a8a8a;font-weight:normal;letter-spacing:0px;white-space:nowrap;">Print Then Cut</div><div style="position:absolute;left:1055px;top:351.7px;font-size:9px;line-height:10.8px;color:#3c3c3c;font-weight:normal;letter-spacing:0px;white-space:nowrap;">Mim-jenkinson-weekly-s...</div><div style="position:absolute;left:1055px;top:363.5px;font-size:9px;line-height:10.8px;color:#8a8a8a;font-weight:normal;letter-spacing:0px;white-space:nowrap;">Print Then Cut</div><div style="position:absolute;left:1055px;top:388.1px;font-size:9px;line-height:10.8px;color:#3c3c3c;font-weight:normal;letter-spacing:0px;white-space:nowrap;">Mim-jenkinson-weekly-s...</div><div style="position:absolute;left:1055px;top:399.9px;font-size:9px;line-height:10.8px;color:#8a8a8a;font-weight:normal;letter-spacing:0px;white-space:nowrap;">Print Then Cut</div><div style="position:absolute;left:1035px;top:431.9px;width:13.5px;height:7px;background:#b9834f"></div><div style="position:absolute;left:1055px;top:424.5px;font-size:9px;line-height:10.8px;color:#3c3c3c;font-weight:normal;letter-spacing:0px;white-space:nowrap;">Mim-jenkinson-weekly-s...</div><div style="position:absolute;left:1055px;top:436.3px;font-size:9px;line-height:10.8px;color:#8a8a8a;font-weight:normal;letter-spacing:0px;white-space:nowrap;">Print Then Cut</div><div style="position:absolute;left:1035px;top:468.3px;width:13.5px;height:7px;background:#a9c49a"></div><div style="position:absolute;left:1055px;top:460.9px;font-size:9px;line-height:10.8px;color:#3c3c3c;font-weight:normal;letter-spacing:0px;white-space:nowrap;">Mim-jenkinson-weekly-s...</div><div style="position:absolute;left:1055px;top:472.7px;font-size:9px;line-height:10.8px;color:#8a8a8a;font-weight:normal;letter-spacing:0px;white-space:nowrap;">Print Then Cut</div><div style="position:absolute;left:1015px;top:490px;width:171.5px;height:35px;border-radius:3px;background:#b2e3d6"></div><div style="position:absolute;left:1035px;top:504.7px;width:13.5px;height:7px;background:#ffffff"></div><div style="position:absolute;left:1055px;top:497.3px;font-size:9px;line-height:10.8px;color:#2a3a36;font-weight:bold;letter-spacing:-0.15px;white-space:nowrap;">Mim-jenkinson-weekly-...</div><div style="position:absolute;left:1055px;top:509.1px;font-size:9px;line-height:10.8px;color:#8a8a8a;font-weight:normal;letter-spacing:0px;white-space:nowrap;">Print Then Cut</div><div style="position:absolute;left:1012px;top:525px;width:188px;height:31px;background:#f4f4f4"></div><div style="position:absolute;left:1018px;top:529px;width:34px;height:23px;background:#fff;border:1px solid #777;box-sizing:border-box;border-radius:2px"></div><div style="position:absolute;left:1058px;top:537.0px;font-size:6.4px;line-height:7.7px;color:#222;font-weight:normal;letter-spacing:-0.1px;white-space:nowrap;">Blank Canvas</div><div style="position:absolute;left:1009px;top:574.8px;font-size:6.2px;line-height:7.4px;color:#c9c9c9;font-weight:normal;letter-spacing:0px;white-space:nowrap;width:40px;text-align:center;">Slice</div><div style="position:absolute;left:1040px;top:574.8px;font-size:6.2px;line-height:7.4px;color:#c9c9c9;font-weight:normal;letter-spacing:0px;white-space:nowrap;width:40px;text-align:center;">Combine</div><div style="position:absolute;left:1073px;top:574.8px;font-size:6.2px;line-height:7.4px;color:#c9c9c9;font-weight:normal;letter-spacing:0px;white-space:nowrap;width:40px;text-align:center;">Attach</div><div style="position:absolute;left:1103px;top:574.8px;font-size:6.2px;line-height:7.4px;color:#c9c9c9;font-weight:normal;letter-spacing:0px;white-space:nowrap;width:40px;text-align:center;">Flatten</div><div style="position:absolute;left:1135px;top:574.8px;font-size:6.2px;line-height:7.4px;color:#c9c9c9;font-weight:normal;letter-spacing:0px;white-space:nowrap;width:40px;text-align:center;">Contour</div><svg style="position:absolute;left:1022px;top:558px" width="14" height="14"><circle cx="5" cy="5" r="3.5" fill="none" stroke="#c9c9c9" stroke-width="1"/><rect x="5" y="5" width="6.5" height="6.5" fill="none" stroke="#c9c9c9" stroke-width="1"/><rect x="5" y="5" width="3.5" height="3.5" fill="none" stroke="#c9c9c9" stroke-width="1"/></svg><svg style="position:absolute;left:1050px;top:558px" width="22" height="14"><rect x="1" y="1" width="6.5" height="6.5" fill="none" stroke="#c9c9c9" stroke-width="1"/><circle cx="8" cy="8" r="4" fill="none" stroke="#c9c9c9" stroke-width="1"/><path d="M15 5H19L17 7Z" fill="#c9c9c9"/></svg><svg style="position:absolute;left:1085px;top:559px" width="16" height="12"><rect x="1" y="2.5" width="8" height="6" rx="3" fill="none" stroke="#c9c9c9" stroke-width="1"/><rect x="6" y="2.5" width="8" height="6" rx="3" fill="none" stroke="#c9c9c9" stroke-width="1"/></svg><svg style="position:absolute;left:1116px;top:557px" width="14" height="14"><path d="M7 1V6M5 4L7 6L9 4M2 7L7 10L12 7M2 10L7 13L12 10" fill="none" stroke="#c9c9c9" stroke-width="1"/></svg><svg style="position:absolute;left:1148px;top:557px" width="14" height="14"><circle cx="7" cy="7" r="5.5" fill="none" stroke="#c9c9c9" stroke-width="1" stroke-dasharray="2 1.5"/></svg><div style="position:absolute;left:1012px;top:586px;width:188px;height:32px;background:#0a4ec4"></div><svg style="position:absolute;left:1021px;top:594px" width="22" height="17"><path d="M3 1H21L17 13H5L2.5 16V13Z" fill="#0f9b6c"/><path d="M2 1H19L16 13H2Z" fill="#13a06f"/><text x="6.5" y="11" font-family="Liberation Sans" font-size="10" font-style="italic" fill="#e8fff3">a</text></svg><div style="position:absolute;left:1047px;top:596.9px;font-size:9.4px;line-height:11.3px;color:#fff;font-weight:normal;letter-spacing:-0.15px;white-space:nowrap;">Try Cricut Access for free</div><svg width="80" height="100" style="position:absolute;left:0;top:518px"><defs><clipPath id="hc"><path d="M70 92H25A22.5 22.5 0 0 1 25 47A22.5 22.5 0 0 1 70 47Z"/></clipPath></defs><g transform="translate(71 91.6) skewY(12) scale(0.95) translate(-70 -92)"><path d="M70 92H25A22.5 22.5 0 0 1 25 47A22.5 22.5 0 0 1 70 47Z" fill="#fbe3e5"/><g clip-path="url(#hc)"><path d="M50 40L55 47L52 53L40 67L24 86L20 100L80 100L80 30Z" fill="#e9874e"/><path d="M24 88L71.7 67L80 67L80 100L20 100Z" fill="#e56c3a"/><path d="M49 39L58 37L55 47Z" fill="#ef9f80"/></g></g></svg></body></html>
